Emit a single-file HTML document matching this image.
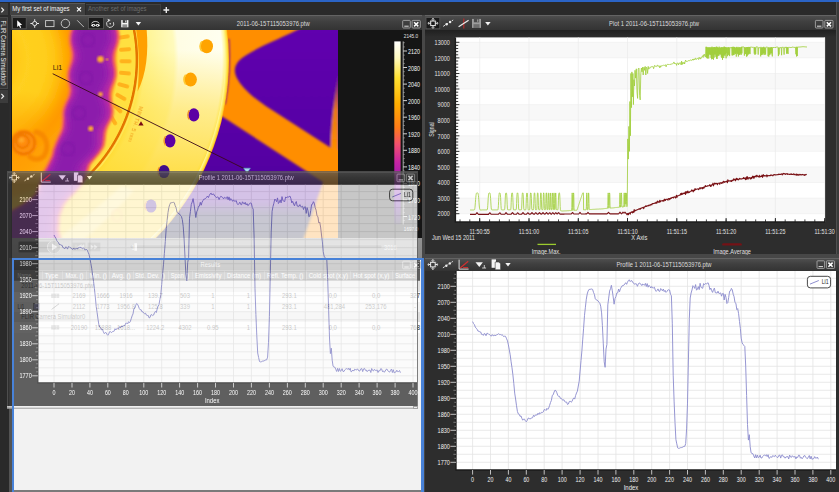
<!DOCTYPE html>
<html><head><meta charset="utf-8"><title>Thermal analysis</title>
<style>
html,body{margin:0;padding:0}
body{width:839px;height:492px;overflow:hidden;position:relative;background:#2c2c2c;font-family:'Liberation Sans',sans-serif;font-size:8px;color:#ddd}
.abs{position:absolute}
.hdr{position:absolute;background:linear-gradient(#4e4e4e,#404040 40%,#333333);border-top:1px solid #636363;box-sizing:border-box}
svg{position:absolute;overflow:hidden}
svg text{font-family:'Liberation Sans',sans-serif;white-space:pre}
</style></head><body>

<div class="abs" style="left:0px;top:0px;width:839px;height:2px;background:#2b64c6;"></div>
<div class="abs" style="left:0px;top:2px;width:839px;height:13px;background:#2a2a2a;"></div>
<div class="abs" style="left:10px;top:3px;width:75px;height:12px;background:#414141;border-top:1px solid #585858;box-sizing:border-box"></div>
<div class="abs" style="left:85.5px;top:3.5px;width:75px;height:11.5px;background:#313131;border-top:1px solid #424242;border-right:1px solid #3c3c3c;box-sizing:border-box"></div>
<div class="abs" style="left:0px;top:2px;width:9px;height:490px;background:#2a2a2a;"></div>
<div class="abs" style="left:0px;top:3px;width:7.5px;height:12px;background:#3c3c3c;"></div>
<div class="abs" style="left:0px;top:17px;width:7.5px;height:72px;background:#363636;border:1px solid #484848;border-left:none;box-sizing:border-box"></div>
<div class="abs" style="left:0px;top:90px;width:7.5px;height:13px;background:#3c3c3c;"></div>
<div class="abs" style="left:422px;top:15px;width:3.5px;height:477px;background:#474747;"></div>
<div class="abs" style="left:425px;top:254px;width:414px;height:4px;background:#474747;"></div>
<div class="abs" style="left:836px;top:2px;width:3px;height:252px;background:#3a3a3a;border-left:1px solid #505050;box-sizing:border-box"></div>
<div class="hdr" style="left:11px;top:15px;width:411px;height:15px"></div>
<div class="abs" style="left:11px;top:30px;width:411px;height:228px;background:#151515;"></div>
<svg style="position:absolute;left:12px;top:30px" width="326" height="208" viewBox="12 30 326 208">
<defs>
<radialGradient id="disc" gradientUnits="userSpaceOnUse" cx="-25.0" cy="60.0" r="254.0"><stop offset="0.1181" stop-color="#ffc010"/><stop offset="0.1575" stop-color="#ffc814"/><stop offset="0.2047" stop-color="#ffd020"/><stop offset="0.2756" stop-color="#ffce1c"/><stop offset="0.3150" stop-color="#ffc412"/><stop offset="0.3465" stop-color="#ffb206"/><stop offset="0.3740" stop-color="#ffa000"/><stop offset="0.3937" stop-color="#ff9800"/><stop offset="0.5512" stop-color="#ffc020"/><stop offset="0.5669" stop-color="#ffe040"/><stop offset="0.6307" stop-color="#ffe040"/><stop offset="0.6339" stop-color="#e47400"/><stop offset="0.6402" stop-color="#e47400"/><stop offset="0.6441" stop-color="#ffe450"/><stop offset="0.6693" stop-color="#fff490"/><stop offset="0.7835" stop-color="#fffabc"/><stop offset="0.8012" stop-color="#fffde4"/><stop offset="0.9724" stop-color="#fffff0"/><stop offset="0.9843" stop-color="#fff8a0"/><stop offset="0.9941" stop-color="#ffe040"/><stop offset="1.0000" stop-color="#ffa810"/></radialGradient>
<linearGradient id="purp" gradientUnits="userSpaceOnUse" x1="0" y1="30" x2="0" y2="238">
 <stop offset="0" stop-color="#6000ae"/><stop offset="0.6" stop-color="#5600a4"/><stop offset="0.82" stop-color="#4c009a"/><stop offset="0.89" stop-color="#1c1248"/><stop offset="1" stop-color="#141434"/>
</linearGradient>
<linearGradient id="rs" gradientUnits="userSpaceOnUse" x1="0" y1="70" x2="0" y2="150"><stop offset="0" stop-color="#ff8e00" stop-opacity="0"/><stop offset="0.5" stop-color="#ff8e00" stop-opacity="0.85"/><stop offset="1" stop-color="#ff8e00"/></linearGradient>
<filter id="b1" x="-10%" y="-10%" width="120%" height="120%"><feGaussianBlur stdDeviation="0.9"/></filter>
<filter id="b2" x="-10%" y="-10%" width="120%" height="120%"><feGaussianBlur stdDeviation="1.6"/></filter>
<filter id="b3" x="-10%" y="-10%" width="120%" height="120%"><feGaussianBlur stdDeviation="2.3"/></filter>
<filter id="b05"><feGaussianBlur stdDeviation="0.55"/></filter>
</defs>
<rect x="12" y="30" width="326" height="208" fill="#ff8e00"/>
<g filter="url(#b1)">
<path d="M308 24 C288 36 258 46 242 58 C233 65 233.5 73 238 80 C244 90 256 100 272 110 L331 148 L340 150 L340 24Z" fill="url(#purp)"/>
<path d="M220 115 L323 182 L303 240 L120 240 L120 180 Z" fill="url(#purp)"/>
<path d="M228.6 39 A257.6 257.6 0 0 1 224.8 104" fill="none" stroke="#7a10a0" stroke-width="1.5"/>
<path d="M338.5 70 L338.5 152 L330.6 148 C331 120 335 95 338.5 70Z" fill="url(#rs)"/>
</g>
<circle cx="-25.0" cy="60.0" r="254.0" fill="url(#disc)" filter="url(#b05)"/>
<linearGradient id="ytint" gradientUnits="userSpaceOnUse" x1="0" y1="50" x2="0" y2="185"><stop offset="0" stop-color="#ffda2c" stop-opacity="0"/><stop offset="0.45" stop-color="#ffda2c" stop-opacity="0.5"/><stop offset="1" stop-color="#ffd620" stop-opacity="0.85"/></linearGradient>
<path fill-rule="evenodd" fill="url(#ytint)" d="M-275.0 60.0a250 250 0 1 0 500 0a250 250 0 1 0 -500 0Z M-190.0 60.0a165 165 0 1 0 330 0a165 165 0 1 0 -330 0Z"/>
<g transform="translate(139.5,106) rotate(108)"><text font-size="5.2" fill="#f09a18" font-family="Liberation Sans, sans-serif" letter-spacing="0.3" filter="url(#b05)">MIN TH. 5 mm</text></g>
<radialGradient id="ll" gradientUnits="userSpaceOnUse" cx="18" cy="165" r="75"><stop offset="0" stop-color="#ff9c00" stop-opacity="0.75"/><stop offset="0.6" stop-color="#ffa000" stop-opacity="0.45"/><stop offset="1" stop-color="#ffa400" stop-opacity="0"/></radialGradient>
<rect x="12" y="80" width="100" height="160" fill="url(#ll)"/>
<path d="M136 29 L146.6 29 C148.6 52 146.6 74 137.6 91.5 C139.6 70 139.4 50 136 29Z" fill="#ffa000" filter="url(#b05)"/>
<rect x="-6" y="-1.9" width="12" height="3.8" rx="1.9" transform="translate(121.4,25.1) rotate(-13.4)" fill="#ffb21a" filter="url(#b05)"/>
<rect x="-6" y="-1.9" width="12" height="3.8" rx="1.9" transform="translate(123.7,37.0) rotate(-8.8)" fill="#ffb21a" filter="url(#b05)"/>
<rect x="-6" y="-1.9" width="12" height="3.8" rx="1.9" transform="translate(125.1,49.5) rotate(-4.0)" fill="#ffb21a" filter="url(#b05)"/>
<rect x="-6" y="-1.9" width="12" height="3.8" rx="1.9" transform="translate(125.5,61.3) rotate(0.5)" fill="#ffb21a" filter="url(#b05)"/>
<rect x="-6" y="-1.9" width="12" height="3.8" rx="1.9" transform="translate(124.9,73.1) rotate(5.0)" fill="#ffb21a" filter="url(#b05)"/>
<rect x="-6" y="-1.9" width="12" height="3.8" rx="1.9" transform="translate(123.3,85.4) rotate(15.6)" fill="#ffb21a" filter="url(#b05)"/>
<rect x="-6" y="-1.9" width="12" height="3.8" rx="1.9" transform="translate(120.9,96.9) rotate(30.0)" fill="#ffb21a" filter="url(#b05)"/>
<rect x="-6" y="-1.9" width="12" height="3.8" rx="1.9" transform="translate(117.5,108.5) rotate(44.8)" fill="#ffb21a" filter="url(#b05)"/>
<rect x="-6" y="-1.9" width="12" height="3.8" rx="1.9" transform="translate(113.1,119.8) rotate(59.5)" fill="#ffb21a" filter="url(#b05)"/>
<path d="M122 186 C100 205 80 222 56 240 L84 240 C104 222 122 205 134 190Z" fill="#fff0a0" opacity="0.55" filter="url(#b2)"/>
<path d="M73.2 22.0 L72.8 24.0 L72.2 26.0 L71.6 28.0 L71.0 30.0 L70.4 32.0 L69.8 34.0 L69.5 36.0 L69.3 38.0 L69.3 40.0 L69.4 42.0 L69.7 44.0 L70.1 46.0 L70.6 48.0 L71.0 50.0 L71.3 52.0 L71.5 54.0 L71.5 56.0 L71.4 58.0 L71.1 60.0 L70.6 62.0 L70.0 64.0 L69.4 66.0 L68.7 68.0 L68.2 70.0 L67.7 72.0 L67.5 74.0 L67.4 76.0 L67.4 78.0 L67.7 80.0 L68.0 82.0 L68.5 84.0 L68.9 86.0 L69.3 88.0 L69.4 90.0 L69.2 92.0 L68.9 94.0 L68.3 96.0 L67.6 98.0 L66.7 100.0 L65.8 102.0 L64.9 104.0 L64.1 106.0 L63.4 108.0 L62.9 110.0 L62.5 112.0 L62.3 114.0 L62.3 116.0 L62.5 118.0 L62.3 120.0 L62.2 122.0 L62.1 124.0 L61.9 126.0 L61.5 128.0 L61.0 130.0 L60.3 132.0 L59.5 134.0 L58.4 136.0 L57.5 138.0 L56.7 140.0 L55.8 142.0 L55.0 144.0 L54.3 146.0 L53.5 148.0 L52.8 150.0 L52.3 152.0 L52.0 154.0 L51.4 156.0 L50.5 158.0 L49.6 160.0 L48.7 162.0 L47.6 164.0 L46.7 166.0 L45.6 168.0 L44.3 170.0 L43.4 172.0 L42.6 174.0 L41.6 176.0 L41.0 178.0 L40.3 180.0 L39.8 182.0 L39.2 184.0 L38.5 186.0 L37.5 188.0 L36.7 190.0 L35.9 192.0 L35.1 194.0 L33.5 196.0 L31.0 198.0 L28.4 200.0 L25.7 202.0 L23.0 204.0 L19.9 206.0 L16.3 208.0 L12.7 210.0 L9.0 212.0 L7.3 214.0 L5.6 216.0 L4.0 218.0 L2.4 220.0 L0.9 222.0 L-0.6 224.0 L-1.9 226.0 L-3.2 228.0 L-4.4 230.0 L-5.5 232.0 L-6.7 234.0 L-7.9 236.0 L-9.1 238.0 L-10.4 240.0 L61.4 240.0 L60.8 238.0 L60.3 236.0 L59.8 234.0 L59.3 232.0 L58.9 230.0 L58.8 228.0 L59.1 226.0 L59.4 224.0 L59.6 222.0 L59.6 220.0 L59.6 218.0 L60.0 216.0 L60.7 214.0 L61.5 212.0 L62.2 210.0 L63.0 208.0 L63.9 206.0 L64.9 204.0 L66.3 202.0 L68.1 200.0 L70.0 198.0 L71.9 196.0 L73.9 194.0 L75.8 192.0 L77.7 190.0 L79.5 188.0 L81.2 186.0 L82.5 184.0 L83.6 182.0 L84.6 180.0 L85.5 178.0 L86.4 176.0 L87.0 174.0 L87.7 172.0 L88.5 170.0 L88.9 168.0 L89.6 166.0 L90.4 164.0 L92.0 162.0 L93.6 160.0 L95.4 158.0 L97.1 156.0 L98.8 154.0 L100.3 152.0 L101.7 150.0 L102.9 148.0 L103.9 146.0 L104.4 144.0 L104.7 142.0 L105.0 140.0 L105.2 138.0 L105.4 136.0 L105.6 134.0 L105.9 132.0 L106.4 130.0 L107.1 128.0 L107.9 126.0 L108.9 124.0 L109.9 122.0 L111.0 120.0 L112.0 118.0 L112.5 116.0 L112.9 114.0 L113.1 112.0 L113.1 110.0 L112.9 108.0 L112.6 106.0 L112.1 104.0 L111.8 102.0 L111.5 100.0 L111.2 98.0 L111.1 96.0 L111.1 94.0 L111.4 92.0 L111.8 90.0 L112.3 88.0 L113.0 86.0 L113.8 84.0 L114.5 82.0 L115.1 80.0 L115.7 78.0 L116.1 76.0 L116.3 74.0 L116.3 72.0 L116.1 70.0 L115.9 68.0 L115.5 66.0 L115.2 64.0 L114.9 62.0 L114.7 60.0 L114.7 58.0 L114.8 56.0 L115.0 54.0 L115.4 52.0 L116.0 50.0 L116.6 48.0 L117.3 46.0 L117.9 44.0 L118.4 42.0 L118.8 40.0 L119.0 38.0 L119.1 36.0 L118.9 34.0 L118.6 32.0 L118.2 30.0 L117.8 28.0 L117.3 26.0 L116.9 24.0 L116.7 22.0Z" fill="#f25c62" stroke="#f6764a" stroke-width="1.6" stroke-linejoin="round" filter="url(#b1)"/>
<path d="M75.6 22.0 L75.2 24.0 L74.6 26.0 L74.0 28.0 L73.4 30.0 L72.8 32.0 L72.2 34.0 L71.9 36.0 L71.7 38.0 L71.7 40.0 L71.8 42.0 L72.1 44.0 L72.5 46.0 L73.0 48.0 L73.4 50.0 L73.7 52.0 L73.9 54.0 L73.9 56.0 L73.8 58.0 L73.5 60.0 L73.0 62.0 L72.4 64.0 L71.8 66.0 L71.1 68.0 L70.6 70.0 L70.1 72.0 L69.9 74.0 L69.8 76.0 L69.8 78.0 L70.1 80.0 L70.4 82.0 L70.9 84.0 L71.3 86.0 L71.7 88.0 L71.8 90.0 L71.6 92.0 L71.3 94.0 L70.7 96.0 L70.0 98.0 L69.1 100.0 L68.2 102.0 L67.3 104.0 L66.5 106.0 L65.8 108.0 L65.3 110.0 L64.9 112.0 L64.7 114.0 L64.7 116.0 L64.9 118.0 L64.7 120.0 L64.6 122.0 L64.5 124.0 L64.3 126.0 L63.9 128.0 L63.4 130.0 L62.7 132.0 L61.9 134.0 L60.8 136.0 L59.9 138.0 L59.1 140.0 L58.2 142.0 L57.4 144.0 L56.7 146.0 L55.9 148.0 L55.2 150.0 L54.7 152.0 L54.4 154.0 L53.8 156.0 L52.9 158.0 L52.0 160.0 L51.1 162.0 L50.0 164.0 L49.1 166.0 L48.0 168.0 L46.7 170.0 L45.8 172.0 L45.0 174.0 L44.0 176.0 L43.4 178.0 L42.7 180.0 L42.2 182.0 L41.6 184.0 L40.9 186.0 L39.9 188.0 L39.1 190.0 L38.3 192.0 L37.5 194.0 L35.9 196.0 L33.4 198.0 L30.8 200.0 L28.1 202.0 L25.4 204.0 L22.3 206.0 L18.7 208.0 L15.1 210.0 L11.4 212.0 L9.7 214.0 L8.0 216.0 L6.4 218.0 L4.8 220.0 L3.3 222.0 L1.8 224.0 L0.5 226.0 L-0.8 228.0 L-2.0 230.0 L-3.1 232.0 L-4.3 234.0 L-5.5 236.0 L-6.7 238.0 L-8.0 240.0 L59.0 240.0 L58.4 238.0 L57.9 236.0 L57.4 234.0 L56.9 232.0 L56.5 230.0 L56.4 228.0 L56.7 226.0 L57.0 224.0 L57.2 222.0 L57.2 220.0 L57.2 218.0 L57.6 216.0 L58.3 214.0 L59.1 212.0 L59.8 210.0 L60.6 208.0 L61.5 206.0 L62.5 204.0 L63.9 202.0 L65.7 200.0 L67.6 198.0 L69.5 196.0 L71.5 194.0 L73.4 192.0 L75.3 190.0 L77.1 188.0 L78.8 186.0 L80.1 184.0 L81.2 182.0 L82.2 180.0 L83.1 178.0 L84.0 176.0 L84.6 174.0 L85.3 172.0 L86.1 170.0 L86.5 168.0 L87.2 166.0 L88.0 164.0 L89.6 162.0 L91.2 160.0 L93.0 158.0 L94.7 156.0 L96.4 154.0 L97.9 152.0 L99.3 150.0 L100.5 148.0 L101.5 146.0 L102.0 144.0 L102.3 142.0 L102.6 140.0 L102.8 138.0 L103.0 136.0 L103.2 134.0 L103.5 132.0 L104.0 130.0 L104.7 128.0 L105.5 126.0 L106.5 124.0 L107.5 122.0 L108.6 120.0 L109.6 118.0 L110.1 116.0 L110.5 114.0 L110.7 112.0 L110.7 110.0 L110.5 108.0 L110.2 106.0 L109.7 104.0 L109.4 102.0 L109.1 100.0 L108.8 98.0 L108.7 96.0 L108.7 94.0 L109.0 92.0 L109.4 90.0 L109.9 88.0 L110.6 86.0 L111.4 84.0 L112.1 82.0 L112.7 80.0 L113.3 78.0 L113.7 76.0 L113.9 74.0 L113.9 72.0 L113.7 70.0 L113.5 68.0 L113.1 66.0 L112.8 64.0 L112.5 62.0 L112.3 60.0 L112.3 58.0 L112.4 56.0 L112.6 54.0 L113.0 52.0 L113.6 50.0 L114.2 48.0 L114.9 46.0 L115.5 44.0 L116.0 42.0 L116.4 40.0 L116.6 38.0 L116.7 36.0 L116.5 34.0 L116.2 32.0 L115.8 30.0 L115.4 28.0 L114.9 26.0 L114.5 24.0 L114.3 22.0Z" fill="#b82ca4" filter="url(#b1)"/>
<path d="M78.4 22.0 L77.9 24.0 L77.2 26.0 L76.4 28.0 L75.5 30.0 L74.7 32.0 L74.1 34.0 L73.6 36.0 L73.4 38.0 L73.4 40.0 L73.7 42.0 L74.1 44.0 L74.7 46.0 L75.3 48.0 L75.9 50.0 L76.4 52.0 L76.7 54.0 L76.8 56.0 L76.7 58.0 L76.2 60.0 L75.6 62.0 L74.9 64.0 L74.0 66.0 L73.2 68.0 L72.5 70.0 L71.9 72.0 L71.6 74.0 L71.5 76.0 L71.6 78.0 L72.0 80.0 L72.5 82.0 L73.2 84.0 L73.8 86.0 L74.4 88.0 L74.6 90.0 L74.5 92.0 L74.2 94.0 L73.6 96.0 L72.7 98.0 L71.7 100.0 L70.6 102.0 L69.4 104.0 L68.5 106.0 L67.6 108.0 L67.0 110.0 L66.6 112.0 L66.5 114.0 L66.6 116.0 L66.8 118.0 L66.9 120.0 L67.0 122.0 L67.1 124.0 L67.0 126.0 L66.8 128.0 L66.3 130.0 L65.6 132.0 L64.7 134.0 L63.5 136.0 L62.4 138.0 L61.3 140.0 L60.3 142.0 L59.3 144.0 L58.5 146.0 L57.6 148.0 L56.9 150.0 L56.5 152.0 L56.3 154.0 L55.9 156.0 L55.2 158.0 L54.5 160.0 L53.7 162.0 L52.8 164.0 L52.0 166.0 L50.9 168.0 L49.5 170.0 L48.6 172.0 L47.6 174.0 L46.4 176.0 L45.6 178.0 L44.9 180.0 L44.2 182.0 L43.7 184.0 L42.9 186.0 L42.0 188.0 L41.1 190.0 L40.4 192.0 L39.8 194.0 L38.2 196.0 L35.8 198.0 L33.3 200.0 L30.7 202.0 L28.0 204.0 L24.9 206.0 L21.3 208.0 L17.6 210.0 L13.8 212.0 L12.0 214.0 L10.2 216.0 L8.5 218.0 L6.8 220.0 L5.3 222.0 L3.8 224.0 L2.5 226.0 L1.3 228.0 L0.2 230.0 L-0.8 232.0 L-1.9 234.0 L-3.0 236.0 L-4.2 238.0 L-5.4 240.0 L54.4 240.0 L53.9 238.0 L53.4 236.0 L53.0 234.0 L52.6 232.0 L52.3 230.0 L52.3 228.0 L52.7 226.0 L53.0 224.0 L53.2 222.0 L53.2 220.0 L53.1 218.0 L53.4 216.0 L54.0 214.0 L54.7 212.0 L55.3 210.0 L56.1 208.0 L56.9 206.0 L57.9 204.0 L59.3 202.0 L61.2 200.0 L63.2 198.0 L65.2 196.0 L67.2 194.0 L69.2 192.0 L71.2 190.0 L73.0 188.0 L74.8 186.0 L76.1 184.0 L77.1 182.0 L78.0 180.0 L78.9 178.0 L79.7 176.0 L80.0 174.0 L80.6 172.0 L81.2 170.0 L81.6 168.0 L82.3 166.0 L83.2 164.0 L84.9 162.0 L86.8 160.0 L88.7 158.0 L90.7 156.0 L92.5 154.0 L94.2 152.0 L95.6 150.0 L96.8 148.0 L97.7 146.0 L98.1 144.0 L98.2 142.0 L98.3 140.0 L98.3 138.0 L98.4 136.0 L98.4 134.0 L98.6 132.0 L99.1 130.0 L99.8 128.0 L100.8 126.0 L101.9 124.0 L103.1 122.0 L104.4 120.0 L105.7 118.0 L106.3 116.0 L106.7 114.0 L107.0 112.0 L106.9 110.0 L106.6 108.0 L106.2 106.0 L105.6 104.0 L105.0 102.0 L104.5 100.0 L104.1 98.0 L103.8 96.0 L103.8 94.0 L104.1 92.0 L104.6 90.0 L105.3 88.0 L106.2 86.0 L107.1 84.0 L108.0 82.0 L108.8 80.0 L109.5 78.0 L109.9 76.0 L110.1 74.0 L110.1 72.0 L109.8 70.0 L109.4 68.0 L108.9 66.0 L108.3 64.0 L107.8 62.0 L107.5 60.0 L107.4 58.0 L107.5 56.0 L107.8 54.0 L108.3 52.0 L109.0 50.0 L109.8 48.0 L110.7 46.0 L111.5 44.0 L112.2 42.0 L112.7 40.0 L112.9 38.0 L112.9 36.0 L112.7 34.0 L112.2 32.0 L111.7 30.0 L111.0 28.0 L110.3 26.0 L109.8 24.0 L109.4 22.0Z" fill="#9a22ae" filter="url(#b3)"/>
<path d="M82.3 22.0 L81.7 24.0 L80.9 26.0 L79.9 28.0 L79.0 30.0 L78.0 32.0 L77.3 34.0 L76.7 36.0 L76.5 38.0 L76.5 40.0 L76.8 42.0 L77.4 44.0 L78.1 46.0 L78.9 48.0 L79.6 50.0 L80.2 52.0 L80.6 54.0 L80.7 56.0 L80.5 58.0 L80.1 60.0 L79.4 62.0 L78.5 64.0 L77.5 66.0 L76.6 68.0 L75.7 70.0 L75.1 72.0 L74.7 74.0 L74.6 76.0 L74.8 78.0 L75.2 80.0 L75.9 82.0 L76.6 84.0 L77.4 86.0 L78.1 88.0 L78.4 90.0 L78.4 92.0 L78.1 94.0 L77.4 96.0 L76.5 98.0 L75.4 100.0 L74.1 102.0 L72.9 104.0 L71.8 106.0 L70.8 108.0 L70.1 110.0 L69.7 112.0 L69.6 114.0 L69.7 116.0 L70.1 118.0 L70.3 120.0 L70.5 122.0 L70.7 124.0 L70.8 126.0 L70.6 128.0 L70.2 130.0 L69.5 132.0 L68.5 134.0 L67.2 136.0 L66.0 138.0 L64.8 140.0 L63.6 142.0 L62.6 144.0 L61.6 146.0 L60.7 148.0 L60.0 150.0 L59.7 152.0 L59.6 154.0 L59.2 156.0 L58.7 158.0 L58.1 160.0 L57.5 162.0 L56.7 164.0 L55.9 166.0 L54.8 168.0 L53.4 170.0 L52.4 172.0 L51.3 174.0 L49.9 176.0 L49.1 178.0 L48.3 180.0 L47.6 182.0 L47.0 184.0 L46.2 186.0 L45.3 188.0 L44.5 190.0 L43.8 192.0 L43.2 194.0 L41.8 196.0 L39.4 198.0 L36.9 200.0 L34.4 202.0 L31.7 204.0 L28.5 206.0 L24.9 208.0 L21.2 210.0 L17.4 212.0 L15.5 214.0 L13.7 216.0 L11.9 218.0 L10.2 220.0 L8.6 222.0 L7.1 224.0 L5.9 226.0 L4.7 228.0 L3.7 230.0 L2.7 232.0 L1.7 234.0 L0.6 236.0 L-0.5 238.0 L-1.7 240.0 L48.7 240.0 L48.2 238.0 L47.8 236.0 L47.4 234.0 L47.1 232.0 L46.8 230.0 L46.9 228.0 L47.4 226.0 L47.7 224.0 L47.9 222.0 L47.9 220.0 L47.8 218.0 L48.0 216.0 L48.6 214.0 L49.1 212.0 L49.7 210.0 L50.4 208.0 L51.2 206.0 L52.2 204.0 L53.6 202.0 L55.6 200.0 L57.6 198.0 L59.7 196.0 L61.8 194.0 L63.8 192.0 L65.8 190.0 L67.7 188.0 L69.5 186.0 L70.8 184.0 L71.8 182.0 L72.6 180.0 L73.4 178.0 L74.1 176.0 L74.3 174.0 L74.8 172.0 L75.3 170.0 L75.7 168.0 L76.4 166.0 L77.3 164.0 L79.2 162.0 L81.2 160.0 L83.2 158.0 L85.3 156.0 L87.3 154.0 L89.0 152.0 L90.5 150.0 L91.7 148.0 L92.6 146.0 L92.9 144.0 L92.9 142.0 L92.8 140.0 L92.7 138.0 L92.6 136.0 L92.5 134.0 L92.7 132.0 L93.2 130.0 L93.9 128.0 L95.0 126.0 L96.2 124.0 L97.6 122.0 L99.0 120.0 L100.4 118.0 L101.1 116.0 L101.6 114.0 L101.9 112.0 L101.8 110.0 L101.5 108.0 L100.9 106.0 L100.1 104.0 L99.5 102.0 L98.8 100.0 L98.3 98.0 L98.0 96.0 L97.9 94.0 L98.2 92.0 L98.8 90.0 L99.6 88.0 L100.5 86.0 L101.6 84.0 L102.7 82.0 L103.6 80.0 L104.4 78.0 L104.8 76.0 L105.0 74.0 L104.9 72.0 L104.6 70.0 L104.0 68.0 L103.4 66.0 L102.7 64.0 L102.1 62.0 L101.7 60.0 L101.5 58.0 L101.6 56.0 L101.9 54.0 L102.5 52.0 L103.3 50.0 L104.3 48.0 L105.3 46.0 L106.2 44.0 L107.0 42.0 L107.6 40.0 L107.8 38.0 L107.8 36.0 L107.5 34.0 L106.9 32.0 L106.2 30.0 L105.4 28.0 L104.6 26.0 L104.0 24.0 L103.6 22.0Z" fill="#8c1cac" filter="url(#b3)"/>
<circle cx="88" cy="40" r="6.5" fill="none" stroke="#7c18a4" stroke-width="2.2" opacity="0.5" filter="url(#b1)"/>
<circle cx="86" cy="78" r="6.5" fill="none" stroke="#7c18a4" stroke-width="2.2" opacity="0.5" filter="url(#b1)"/>
<circle cx="79" cy="113" r="6.5" fill="none" stroke="#7c18a4" stroke-width="2.2" opacity="0.5" filter="url(#b1)"/>
<circle cx="68" cy="149" r="6.5" fill="none" stroke="#7c18a4" stroke-width="2.2" opacity="0.5" filter="url(#b1)"/>
<circle cx="49" cy="186" r="6.5" fill="none" stroke="#7c18a4" stroke-width="2.2" opacity="0.5" filter="url(#b1)"/>
<circle cx="100.5" cy="59.3" r="3.3" fill="#ffae30" filter="url(#b1)"/>
<circle cx="100.5" cy="94.3" r="2.2" fill="#ffae30" filter="url(#b1)"/>
<circle cx="90.8" cy="128.6" r="2.6" fill="#ffae30" filter="url(#b1)"/>
<circle cx="107" cy="59.5" r="1.2" fill="#ffae30" filter="url(#b1)"/>
<g filter="url(#b1)"><circle cx="23.7" cy="143" r="13.5" fill="#ff920a"/><circle cx="23.7" cy="143" r="11" fill="none" stroke="#ec6e02" stroke-width="1.8"/><circle cx="22.5" cy="141.5" r="6.5" fill="#ff8c08"/><circle cx="22.5" cy="141.5" r="6.5" fill="none" stroke="#e86c04" stroke-width="1.4"/><circle cx="21.5" cy="140" r="2.6" fill="#ffa828"/><path d="M36 132C46 134 50 146 44 156C40 160 34 160 30 157" fill="none" stroke="#f88a06" stroke-width="5" stroke-linecap="round"/></g>
<ellipse cx="206.7" cy="46.3" rx="6.3" ry="7" fill="#ffa400" filter="url(#b05)"/>
<path d="M201.79999999999998 41.5 A6.3 7 0 0 0 201.79999999999998 51.099999999999994" fill="none" stroke="#ffc830" stroke-width="1.7" filter="url(#b05)"/>
<ellipse cx="190.6" cy="79.6" rx="6.3" ry="7" fill="#ffa400" filter="url(#b05)"/>
<path d="M185.7 74.8 A6.3 7 0 0 0 185.7 84.39999999999999" fill="none" stroke="#ffc830" stroke-width="1.7" filter="url(#b05)"/>
<ellipse cx="193.8" cy="114.9" rx="5.5" ry="6.6" fill="#5c00a4" filter="url(#b05)"/>
<path d="M189.3 110.5 A5.5 6.6 0 0 0 189.3 119.30000000000001" fill="none" stroke="#f0902a" stroke-width="1.5" filter="url(#b05)"/>
<ellipse cx="170" cy="140.8" rx="5.5" ry="6.6" fill="#5c00a4" filter="url(#b05)"/>
<path d="M165.5 136.4 A5.5 6.6 0 0 0 165.5 145.20000000000002" fill="none" stroke="#f0902a" stroke-width="1.5" filter="url(#b05)"/>
<ellipse cx="164" cy="171.5" rx="5.5" ry="6.6" fill="#40088a" filter="url(#b05)"/>
<path d="M159.5 167.1 A5.5 6.6 0 0 0 159.5 175.9" fill="none" stroke="#f0902a" stroke-width="1.5" filter="url(#b05)"/>
<ellipse cx="151" cy="206" rx="5.5" ry="6.6" fill="#40088a" filter="url(#b05)"/>
<path d="M146.5 201.6 A5.5 6.6 0 0 0 146.5 210.4" fill="none" stroke="#f0902a" stroke-width="1.5" filter="url(#b05)"/>
<ellipse cx="117" cy="215.6" rx="5" ry="6" fill="none" stroke="#ffc040" stroke-width="1.6" filter="url(#b1)"/>
<path d="M52.7 73.7L247 170" stroke="#3a0818" stroke-width="0.9"/>
<text transform="translate(52.80,69.73) scale(1.036,1)" font-size="6.8" fill="#3c2208" >Li1</text>
<path d="M141 121.2L143.6 125.6H138.4Z" fill="#7a0c14"/>
<path d="M243.6 168.2H250.4L247 173Z" fill="#a8d8f0" stroke="#5d9cc0" stroke-width="0.6"/>
</svg>
<svg style="left:0;top:0" width="10" height="110" viewBox="0 0 10 110"><path d="M1.4 7.6L3.6 10L1.4 12.4M1.4 93.8L3.6 96.2L1.4 98.6" stroke="#eee" stroke-width="1.2" fill="none"/><g transform="translate(1.2,20.6) rotate(90)"><text transform="translate(0.00,0.21) scale(0.840,1)" font-size="7" fill="#e6e6e6" >FLIR Camera Simulator0</text></g></svg>
<svg style="left:380px;top:30px" width="43" height="210" viewBox="380 30 43 210"><defs><linearGradient id="cbar" x1="0" y1="0" x2="0" y2="1">
<stop offset="0" stop-color="#ffffff"/><stop offset="0.09" stop-color="#fffac0"/><stop offset="0.2" stop-color="#ffe030"/><stop offset="0.34" stop-color="#ffae00"/>
<stop offset="0.47" stop-color="#ff7c18"/><stop offset="0.56" stop-color="#f2506c"/><stop offset="0.66" stop-color="#c624a4"/><stop offset="0.77" stop-color="#9418b0"/><stop offset="0.88" stop-color="#5a00a0"/><stop offset="1" stop-color="#100828"/></linearGradient></defs><rect x="394.3" y="41.4" width="6.3" height="183" fill="url(#cbar)"/><path d="M403.2 41.4V224.4" stroke="#cfcfcf" stroke-width="0.8"/><path d="M403.2 51.0H407" stroke="#e6e6e6" stroke-width="0.9"/><text transform="translate(408.00,54.06) scale(0.674,1)" font-size="8" fill="#f8f8f8" >2120</text><path d="M403.2 55.1H404.8" stroke="#bbb" stroke-width="0.6"/><path d="M403.2 59.3H404.8" stroke="#bbb" stroke-width="0.6"/><path d="M403.2 63.4H404.8" stroke="#bbb" stroke-width="0.6"/><path d="M403.2 67.5H407" stroke="#e6e6e6" stroke-width="0.9"/><text transform="translate(408.00,70.61) scale(0.674,1)" font-size="8" fill="#f8f8f8" >2080</text><path d="M403.2 71.7H404.8" stroke="#bbb" stroke-width="0.6"/><path d="M403.2 75.8H404.8" stroke="#bbb" stroke-width="0.6"/><path d="M403.2 80.0H404.8" stroke="#bbb" stroke-width="0.6"/><path d="M403.2 84.1H407" stroke="#e6e6e6" stroke-width="0.9"/><text transform="translate(408.00,87.16) scale(0.674,1)" font-size="8" fill="#f8f8f8" >2040</text><path d="M403.2 88.2H404.8" stroke="#bbb" stroke-width="0.6"/><path d="M403.2 92.4H404.8" stroke="#bbb" stroke-width="0.6"/><path d="M403.2 96.5H404.8" stroke="#bbb" stroke-width="0.6"/><path d="M403.2 100.6H407" stroke="#e6e6e6" stroke-width="0.9"/><text transform="translate(408.00,103.71) scale(0.674,1)" font-size="8" fill="#f8f8f8" >2000</text><path d="M403.2 104.8H404.8" stroke="#bbb" stroke-width="0.6"/><path d="M403.2 108.9H404.8" stroke="#bbb" stroke-width="0.6"/><path d="M403.2 113.1H404.8" stroke="#bbb" stroke-width="0.6"/><path d="M403.2 117.2H407" stroke="#e6e6e6" stroke-width="0.9"/><text transform="translate(408.00,120.26) scale(0.674,1)" font-size="8" fill="#f8f8f8" >1960</text><path d="M403.2 121.3H404.8" stroke="#bbb" stroke-width="0.6"/><path d="M403.2 125.5H404.8" stroke="#bbb" stroke-width="0.6"/><path d="M403.2 129.6H404.8" stroke="#bbb" stroke-width="0.6"/><path d="M403.2 133.8H407" stroke="#e6e6e6" stroke-width="0.9"/><text transform="translate(408.00,136.81) scale(0.674,1)" font-size="8" fill="#f8f8f8" >1920</text><path d="M403.2 137.9H404.8" stroke="#bbb" stroke-width="0.6"/><path d="M403.2 142.0H404.8" stroke="#bbb" stroke-width="0.6"/><path d="M403.2 146.2H404.8" stroke="#bbb" stroke-width="0.6"/><path d="M403.2 150.3H407" stroke="#e6e6e6" stroke-width="0.9"/><text transform="translate(408.00,153.36) scale(0.674,1)" font-size="8" fill="#f8f8f8" >1880</text><path d="M403.2 154.4H404.8" stroke="#bbb" stroke-width="0.6"/><path d="M403.2 158.6H404.8" stroke="#bbb" stroke-width="0.6"/><path d="M403.2 162.7H404.8" stroke="#bbb" stroke-width="0.6"/><path d="M403.2 166.9H407" stroke="#e6e6e6" stroke-width="0.9"/><text transform="translate(408.00,169.91) scale(0.674,1)" font-size="8" fill="#f8f8f8" >1840</text><path d="M403.2 171.0H404.8" stroke="#bbb" stroke-width="0.6"/><path d="M403.2 175.1H404.8" stroke="#bbb" stroke-width="0.6"/><path d="M403.2 179.3H404.8" stroke="#bbb" stroke-width="0.6"/><path d="M403.2 183.4H407" stroke="#e6e6e6" stroke-width="0.9"/><text transform="translate(408.00,186.46) scale(0.674,1)" font-size="8" fill="#f8f8f8" >1800</text><path d="M403.2 187.5H404.8" stroke="#bbb" stroke-width="0.6"/><path d="M403.2 191.7H404.8" stroke="#bbb" stroke-width="0.6"/><path d="M403.2 195.8H404.8" stroke="#bbb" stroke-width="0.6"/><path d="M403.2 200.0H407" stroke="#e6e6e6" stroke-width="0.9"/><text transform="translate(408.00,203.01) scale(0.674,1)" font-size="8" fill="#f8f8f8" >1760</text><path d="M403.2 204.1H404.8" stroke="#bbb" stroke-width="0.6"/><path d="M403.2 208.2H404.8" stroke="#bbb" stroke-width="0.6"/><path d="M403.2 212.4H404.8" stroke="#bbb" stroke-width="0.6"/><path d="M403.2 216.5H407" stroke="#e6e6e6" stroke-width="0.9"/><text transform="translate(408.00,219.56) scale(0.674,1)" font-size="8" fill="#f8f8f8" >1720</text><path d="M403.2 220.6H404.8" stroke="#bbb" stroke-width="0.6"/><path d="M403.2 46.9H404.8" stroke="#bbb" stroke-width="0.6"/><path d="M403.2 42.7H404.8" stroke="#bbb" stroke-width="0.6"/><text transform="translate(403.80,38.08) scale(0.801,1)" font-size="5.8" fill="#e4e4e4" >2145.0</text><text transform="translate(403.80,230.68) scale(0.801,1)" font-size="5.8" fill="#e4e4e4" >1697.0</text></svg>
<div class="abs" style="left:12px;top:238px;width:410px;height:20px;background:linear-gradient(#929292,#888888);"></div>
<svg style="left:12px;top:238px" width="410" height="20" viewBox="12 238 410 20"><rect x="18.5" y="241.5" width="34" height="11" rx="1.5" fill="#383838" stroke="#6a6a6a" stroke-width="0.8"/><circle cx="54" cy="247" r="6.6" fill="#5a5a5a" stroke="#9a9a9a" stroke-width="1"/><path d="M52 243.6L57.4 247L52 250.4Z" fill="#dcdcdc"/><circle cx="66" cy="244" r="3.2" fill="none" stroke="#8a8a8a" stroke-width="0.9"/><rect x="72.5" y="242.5" width="13" height="9" rx="1" fill="#5a5a5a" stroke="#7e7e7e" stroke-width="0.8"/><rect x="87.5" y="242.5" width="13" height="9" rx="1" fill="#5a5a5a" stroke="#7e7e7e" stroke-width="0.8"/><path d="M76 244.6V249.4M81.4 244.6L77.4 247L81.4 249.4ZM84 244.6L80.6 247L84 249.4Z" fill="#b8b8b8" stroke="#b8b8b8" stroke-width="0.5"/><path d="M90.6 244.6L94 247L90.6 249.4ZM94.2 244.6L97.6 247L94.2 249.4Z" fill="#b8b8b8"/><rect x="130" y="245" width="252" height="3.6" rx="1.8" fill="#5c5c5c" stroke="#a0a0a0" stroke-width="0.5"/><rect x="134.4" y="243.2" width="2.6" height="7.6" fill="#e8e8e8"/><text transform="translate(131.40,249.51) scale(0.840,1)" font-size="7" fill="#ddd" >1</text><text transform="translate(384.00,249.85) scale(0.765,1)" font-size="7.4" fill="#e8e8e8" >3016</text></svg>
<div class="abs" style="left:12px;top:258px;width:410px;height:234px;background:#f2f2f2;"></div>
<div class="abs" style="left:14px;top:260px;width:406px;height:10px;background:linear-gradient(#464646,#343434);"></div>
<div class="abs" style="left:14px;top:270px;width:406px;height:11px;background:#5e5e5e;border-bottom:1px solid #7c7c7c;box-sizing:border-box"></div>
<div class="abs" style="left:14px;top:281px;width:406px;height:10.5px;background:#dedede;"></div>
<div class="abs" style="left:14px;top:291.5px;width:406px;height:10.5px;background:#fdfdfd;"></div>
<div class="abs" style="left:14px;top:302px;width:406px;height:10px;background:#f1f1f1;"></div>
<div class="abs" style="left:14px;top:312px;width:406px;height:10px;background:#dedede;"></div>
<div class="abs" style="left:14px;top:322px;width:406px;height:11px;background:#fdfdfd;"></div>
<svg style="left:0;top:258px" width="430" height="100" viewBox="0 258 430 100"><text transform="translate(200.60,267.38) scale(0.816,1)" font-size="7.2" fill="#e0e0e0" >Results</text><text transform="translate(17.50,278.25) scale(0.684,1)" font-size="7.4" fill="#ffffff" >Name</text><text transform="translate(44.70,278.25) scale(0.848,1)" font-size="7.4" fill="#ffffff" >Type</text><text transform="translate(65.50,278.25) scale(0.782,1)" font-size="7.4" fill="#ffffff" >Max. ()</text><text transform="translate(89.60,278.25) scale(0.821,1)" font-size="7.4" fill="#ffffff" >Min. ()</text><text transform="translate(111.80,278.25) scale(0.877,1)" font-size="7.4" fill="#ffffff" >Avg. ()</text><text transform="translate(135.00,278.25) scale(0.814,1)" font-size="7.4" fill="#ffffff" >Std. Dev. ()</text><text transform="translate(170.70,278.25) scale(0.758,1)" font-size="7.4" fill="#ffffff" >Span ()</text><text transform="translate(195.00,278.25) scale(0.803,1)" font-size="7.4" fill="#ffffff" >Emissivity</text><text transform="translate(227.00,278.25) scale(0.811,1)" font-size="7.4" fill="#ffffff" >Distance (m)</text><text transform="translate(267.00,278.25) scale(0.820,1)" font-size="7.4" fill="#ffffff" >Refl. Temp. ()</text><text transform="translate(308.70,278.25) scale(0.824,1)" font-size="7.4" fill="#ffffff" >Cold spot (x,y)</text><text transform="translate(353.00,278.25) scale(0.825,1)" font-size="7.4" fill="#ffffff" >Hot spot (x,y)</text><text transform="translate(395.00,278.25) scale(0.784,1)" font-size="7.4" fill="#ffffff" >Surface</text><path d="M42.5 271V280" stroke="#808080" stroke-width="1"/><path d="M62.5 271V280" stroke="#808080" stroke-width="1"/><path d="M86.5 271V280" stroke="#808080" stroke-width="1"/><path d="M109.5 271V280" stroke="#808080" stroke-width="1"/><path d="M133.5 271V280" stroke="#808080" stroke-width="1"/><path d="M168.5 271V280" stroke="#808080" stroke-width="1"/><path d="M192.5 271V280" stroke="#808080" stroke-width="1"/><path d="M224.5 271V280" stroke="#808080" stroke-width="1"/><path d="M264.5 271V280" stroke="#808080" stroke-width="1"/><path d="M306.5 271V280" stroke="#808080" stroke-width="1"/><path d="M350.5 271V280" stroke="#808080" stroke-width="1"/><path d="M392.5 271V280" stroke="#808080" stroke-width="1"/><text transform="translate(21.30,287.85) scale(0.790,1)" font-size="7.4" fill="#1a1a1a" >2011-06-15T115053976.ptw</text><text transform="translate(21.30,318.95) scale(0.782,1)" font-size="7.4" fill="#1a1a1a" >FLIR Camera Simulator0</text><text transform="translate(72.42,298.45) scale(0.800,1)" font-size="7.4" fill="#1a1a1a" >2169</text><text transform="translate(96.42,298.45) scale(0.800,1)" font-size="7.4" fill="#1a1a1a" >1666</text><text transform="translate(119.42,298.45) scale(0.800,1)" font-size="7.4" fill="#1a1a1a" >1916</text><text transform="translate(147.89,298.45) scale(0.800,1)" font-size="7.4" fill="#1a1a1a" >139.7</text><text transform="translate(180.06,298.45) scale(0.800,1)" font-size="7.4" fill="#1a1a1a" >503</text><text transform="translate(211.15,298.45) scale(0.800,1)" font-size="7.4" fill="#1a1a1a" >1</text><text transform="translate(246.75,298.45) scale(0.800,1)" font-size="7.4" fill="#1a1a1a" >1</text><text transform="translate(281.99,298.45) scale(0.800,1)" font-size="7.4" fill="#1a1a1a" >293.1</text><text transform="translate(328.69,298.45) scale(0.800,1)" font-size="7.4" fill="#1a1a1a" >0,0</text><text transform="translate(371.99,298.45) scale(0.800,1)" font-size="7.4" fill="#1a1a1a" >0,0</text><text transform="translate(410.06,298.45) scale(0.800,1)" font-size="7.4" fill="#1a1a1a" >327</text><text transform="translate(72.64,309.25) scale(0.800,1)" font-size="7.4" fill="#1a1a1a" >2112</text><text transform="translate(96.42,309.25) scale(0.800,1)" font-size="7.4" fill="#1a1a1a" >1773</text><text transform="translate(116.95,309.25) scale(0.800,1)" font-size="7.4" fill="#1a1a1a" >1956.8</text><text transform="translate(147.89,309.25) scale(0.800,1)" font-size="7.4" fill="#1a1a1a" >125.8</text><text transform="translate(180.06,309.25) scale(0.800,1)" font-size="7.4" fill="#1a1a1a" >339</text><text transform="translate(211.15,309.25) scale(0.800,1)" font-size="7.4" fill="#1a1a1a" >1</text><text transform="translate(246.75,309.25) scale(0.800,1)" font-size="7.4" fill="#1a1a1a" >1</text><text transform="translate(281.99,309.25) scale(0.800,1)" font-size="7.4" fill="#1a1a1a" >293.1</text><text transform="translate(323.80,309.25) scale(0.800,1)" font-size="7.4" fill="#1a1a1a" >481,284</text><text transform="translate(365.30,309.25) scale(0.800,1)" font-size="7.4" fill="#1a1a1a" >253,176</text><text transform="translate(414.01,309.25) scale(0.800,1)" font-size="7.4" fill="#1a1a1a" >-</text><text transform="translate(70.77,330.05) scale(0.800,1)" font-size="7.4" fill="#1a1a1a" >20190</text><text transform="translate(94.77,330.05) scale(0.800,1)" font-size="7.4" fill="#1a1a1a" >15888</text><text transform="translate(116.95,330.05) scale(0.800,1)" font-size="7.4" fill="#1a1a1a" >1618...</text><text transform="translate(146.25,330.05) scale(0.800,1)" font-size="7.4" fill="#1a1a1a" >1224.2</text><text transform="translate(178.42,330.05) scale(0.800,1)" font-size="7.4" fill="#1a1a1a" >4302</text><text transform="translate(207.04,330.05) scale(0.800,1)" font-size="7.4" fill="#1a1a1a" >0.95</text><text transform="translate(246.75,330.05) scale(0.800,1)" font-size="7.4" fill="#1a1a1a" >1</text><text transform="translate(281.99,330.05) scale(0.800,1)" font-size="7.4" fill="#1a1a1a" >293.1</text><text transform="translate(328.69,330.05) scale(0.800,1)" font-size="7.4" fill="#1a1a1a" >0,0</text><text transform="translate(371.99,330.05) scale(0.800,1)" font-size="7.4" fill="#1a1a1a" >0,0</text><text transform="translate(410.06,330.05) scale(0.800,1)" font-size="7.4" fill="#1a1a1a" >768</text><text transform="translate(17.60,309.25) scale(0.689,1)" font-size="7.4" fill="#111" >Li1</text><rect x="51.2" y="293.6" width="8" height="4.4" fill="#9a9a9a"/><path d="M51.2 295.8H59.2M53.9 293.6V298.0M56.5 293.6V298.0" stroke="#ddd" stroke-width="0.5"/><rect x="51.2" y="325.2" width="8" height="4.4" fill="#9a9a9a"/><path d="M51.2 327.4H59.2M53.9 325.2V329.59999999999997M56.5 325.2V329.59999999999997" stroke="#ddd" stroke-width="0.5"/><rect x="33.6" y="303.4" width="6" height="6.4" fill="#8c8cc8" stroke="#555" stroke-width="0.7"/><path d="M51.6 309.4L59 303.8" stroke="#444" stroke-width="0.9"/><g fill="none" stroke="#b4b4b4" stroke-width="0.8"><rect x="402.7" y="261.2" width="7.6" height="7.6" rx="0.8"/><path d="M404.3 267.0H408.7" stroke="#e0e0e0" stroke-width="1"/><rect x="412.1" y="261.2" width="8.2" height="7.6" rx="0.8"/><path d="M414.1 263.0L418.3 267.2M418.3 263.0L414.1 267.2" stroke="#ffffff" stroke-width="1.5"/></g></svg>
<div class="abs" style="left:14px;top:490px;width:407px;height:2px;background:#7a7a7a;"></div>
<div class="abs" style="left:9px;top:258px;width:3px;height:234px;background:#545454;"></div>
<div class="hdr" style="left:425px;top:15px;width:411px;height:15px"></div>
<div class="abs" style="left:425px;top:30px;width:411px;height:224px;background:linear-gradient(#202020,#2d2d2d 7px);"></div>
<svg style="left:425px;top:30px" width="411" height="225" viewBox="425 30 411 225"><rect x="455.4" y="37.4" width="369.6" height="184.6" fill="#ffffff"/><rect x="455.4" y="198.1" width="369.6" height="15.6" fill="#f8f8f8"/><rect x="455.4" y="166.9" width="369.6" height="15.6" fill="#f8f8f8"/><rect x="455.4" y="135.8" width="369.6" height="15.6" fill="#f8f8f8"/><rect x="455.4" y="104.6" width="369.6" height="15.6" fill="#f8f8f8"/><rect x="455.4" y="73.5" width="369.6" height="15.6" fill="#f8f8f8"/><rect x="455.4" y="42.3" width="369.6" height="15.6" fill="#f8f8f8"/><path d="M455.4 213.7H825" stroke="#efefef" stroke-width="0.6"/><path d="M455.4 198.1H825" stroke="#efefef" stroke-width="0.6"/><path d="M455.4 182.5H825" stroke="#efefef" stroke-width="0.6"/><path d="M455.4 166.9H825" stroke="#efefef" stroke-width="0.6"/><path d="M455.4 151.4H825" stroke="#efefef" stroke-width="0.6"/><path d="M455.4 135.8H825" stroke="#efefef" stroke-width="0.6"/><path d="M455.4 120.2H825" stroke="#efefef" stroke-width="0.6"/><path d="M455.4 104.6H825" stroke="#efefef" stroke-width="0.6"/><path d="M455.4 89.0H825" stroke="#efefef" stroke-width="0.6"/><path d="M455.4 73.5H825" stroke="#efefef" stroke-width="0.6"/><path d="M455.4 57.9H825" stroke="#efefef" stroke-width="0.6"/><path d="M455.4 42.3H825" stroke="#efefef" stroke-width="0.6"/><path d="M479.7 37.4V222" stroke="#ebebeb" stroke-width="0.7"/><path d="M529.0 37.4V222" stroke="#ebebeb" stroke-width="0.7"/><path d="M578.3 37.4V222" stroke="#ebebeb" stroke-width="0.7"/><path d="M627.5 37.4V222" stroke="#ebebeb" stroke-width="0.7"/><path d="M676.8 37.4V222" stroke="#ebebeb" stroke-width="0.7"/><path d="M726.1 37.4V222" stroke="#ebebeb" stroke-width="0.7"/><path d="M775.4 37.4V222" stroke="#ebebeb" stroke-width="0.7"/><path d="M824.7 37.4V222" stroke="#ebebeb" stroke-width="0.7"/><path d="M455.4 37.4V222H825" stroke="#1c1c1c" stroke-width="1.4" fill="none"/><path d="M455.4 213.7h4" stroke="#1c1c1c" stroke-width="0.9"/><path d="M455.4 210.6h2.8" stroke="#1c1c1c" stroke-width="0.9"/><path d="M455.4 207.4h2.8" stroke="#1c1c1c" stroke-width="0.9"/><path d="M455.4 204.3h2.8" stroke="#1c1c1c" stroke-width="0.9"/><path d="M455.4 201.2h2.8" stroke="#1c1c1c" stroke-width="0.9"/><path d="M455.4 198.1h4" stroke="#1c1c1c" stroke-width="0.9"/><path d="M455.4 195.0h2.8" stroke="#1c1c1c" stroke-width="0.9"/><path d="M455.4 191.9h2.8" stroke="#1c1c1c" stroke-width="0.9"/><path d="M455.4 188.8h2.8" stroke="#1c1c1c" stroke-width="0.9"/><path d="M455.4 185.6h2.8" stroke="#1c1c1c" stroke-width="0.9"/><path d="M455.4 182.5h4" stroke="#1c1c1c" stroke-width="0.9"/><path d="M455.4 179.4h2.8" stroke="#1c1c1c" stroke-width="0.9"/><path d="M455.4 176.3h2.8" stroke="#1c1c1c" stroke-width="0.9"/><path d="M455.4 173.2h2.8" stroke="#1c1c1c" stroke-width="0.9"/><path d="M455.4 170.1h2.8" stroke="#1c1c1c" stroke-width="0.9"/><path d="M455.4 166.9h4" stroke="#1c1c1c" stroke-width="0.9"/><path d="M455.4 163.8h2.8" stroke="#1c1c1c" stroke-width="0.9"/><path d="M455.4 160.7h2.8" stroke="#1c1c1c" stroke-width="0.9"/><path d="M455.4 157.6h2.8" stroke="#1c1c1c" stroke-width="0.9"/><path d="M455.4 154.5h2.8" stroke="#1c1c1c" stroke-width="0.9"/><path d="M455.4 151.4h4" stroke="#1c1c1c" stroke-width="0.9"/><path d="M455.4 148.2h2.8" stroke="#1c1c1c" stroke-width="0.9"/><path d="M455.4 145.1h2.8" stroke="#1c1c1c" stroke-width="0.9"/><path d="M455.4 142.0h2.8" stroke="#1c1c1c" stroke-width="0.9"/><path d="M455.4 138.9h2.8" stroke="#1c1c1c" stroke-width="0.9"/><path d="M455.4 135.8h4" stroke="#1c1c1c" stroke-width="0.9"/><path d="M455.4 132.7h2.8" stroke="#1c1c1c" stroke-width="0.9"/><path d="M455.4 129.5h2.8" stroke="#1c1c1c" stroke-width="0.9"/><path d="M455.4 126.4h2.8" stroke="#1c1c1c" stroke-width="0.9"/><path d="M455.4 123.3h2.8" stroke="#1c1c1c" stroke-width="0.9"/><path d="M455.4 120.2h4" stroke="#1c1c1c" stroke-width="0.9"/><path d="M455.4 117.1h2.8" stroke="#1c1c1c" stroke-width="0.9"/><path d="M455.4 114.0h2.8" stroke="#1c1c1c" stroke-width="0.9"/><path d="M455.4 110.9h2.8" stroke="#1c1c1c" stroke-width="0.9"/><path d="M455.4 107.7h2.8" stroke="#1c1c1c" stroke-width="0.9"/><path d="M455.4 104.6h4" stroke="#1c1c1c" stroke-width="0.9"/><path d="M455.4 101.5h2.8" stroke="#1c1c1c" stroke-width="0.9"/><path d="M455.4 98.4h2.8" stroke="#1c1c1c" stroke-width="0.9"/><path d="M455.4 95.3h2.8" stroke="#1c1c1c" stroke-width="0.9"/><path d="M455.4 92.2h2.8" stroke="#1c1c1c" stroke-width="0.9"/><path d="M455.4 89.0h4" stroke="#1c1c1c" stroke-width="0.9"/><path d="M455.4 85.9h2.8" stroke="#1c1c1c" stroke-width="0.9"/><path d="M455.4 82.8h2.8" stroke="#1c1c1c" stroke-width="0.9"/><path d="M455.4 79.7h2.8" stroke="#1c1c1c" stroke-width="0.9"/><path d="M455.4 76.6h2.8" stroke="#1c1c1c" stroke-width="0.9"/><path d="M455.4 73.5h4" stroke="#1c1c1c" stroke-width="0.9"/><path d="M455.4 70.3h2.8" stroke="#1c1c1c" stroke-width="0.9"/><path d="M455.4 67.2h2.8" stroke="#1c1c1c" stroke-width="0.9"/><path d="M455.4 64.1h2.8" stroke="#1c1c1c" stroke-width="0.9"/><path d="M455.4 61.0h2.8" stroke="#1c1c1c" stroke-width="0.9"/><path d="M455.4 57.9h4" stroke="#1c1c1c" stroke-width="0.9"/><path d="M455.4 54.8h2.8" stroke="#1c1c1c" stroke-width="0.9"/><path d="M455.4 51.6h2.8" stroke="#1c1c1c" stroke-width="0.9"/><path d="M455.4 48.5h2.8" stroke="#1c1c1c" stroke-width="0.9"/><path d="M455.4 45.4h2.8" stroke="#1c1c1c" stroke-width="0.9"/><path d="M455.4 42.3h4" stroke="#1c1c1c" stroke-width="0.9"/><text transform="translate(437.60,216.40) scale(0.722,1)" font-size="7.6" fill="#e4e4e4" >2000</text><text transform="translate(437.60,200.82) scale(0.722,1)" font-size="7.6" fill="#e4e4e4" >3000</text><text transform="translate(437.60,185.24) scale(0.722,1)" font-size="7.6" fill="#e4e4e4" >4000</text><text transform="translate(437.60,169.66) scale(0.722,1)" font-size="7.6" fill="#e4e4e4" >5000</text><text transform="translate(437.60,154.08) scale(0.722,1)" font-size="7.6" fill="#e4e4e4" >6000</text><text transform="translate(437.60,138.50) scale(0.722,1)" font-size="7.6" fill="#e4e4e4" >7000</text><text transform="translate(437.60,122.92) scale(0.722,1)" font-size="7.6" fill="#e4e4e4" >8000</text><text transform="translate(437.60,107.34) scale(0.722,1)" font-size="7.6" fill="#e4e4e4" >9000</text><text transform="translate(434.60,91.76) scale(0.719,1)" font-size="7.6" fill="#e4e4e4" >10000</text><text transform="translate(434.60,76.18) scale(0.739,1)" font-size="7.6" fill="#e4e4e4" >11000</text><text transform="translate(434.60,60.60) scale(0.719,1)" font-size="7.6" fill="#e4e4e4" >12000</text><text transform="translate(434.60,45.02) scale(0.719,1)" font-size="7.6" fill="#e4e4e4" >13000</text><path d="M460.0 222v-2.6" stroke="#1c1c1c" stroke-width="0.8"/><path d="M469.8 222v-2.6" stroke="#1c1c1c" stroke-width="0.8"/><path d="M479.7 222v-2.6" stroke="#1c1c1c" stroke-width="0.8"/><path d="M489.6 222v-2.6" stroke="#1c1c1c" stroke-width="0.8"/><path d="M499.4 222v-2.6" stroke="#1c1c1c" stroke-width="0.8"/><path d="M509.3 222v-2.6" stroke="#1c1c1c" stroke-width="0.8"/><path d="M519.1 222v-2.6" stroke="#1c1c1c" stroke-width="0.8"/><path d="M529.0 222v-2.6" stroke="#1c1c1c" stroke-width="0.8"/><path d="M538.8 222v-2.6" stroke="#1c1c1c" stroke-width="0.8"/><path d="M548.7 222v-2.6" stroke="#1c1c1c" stroke-width="0.8"/><path d="M558.5 222v-2.6" stroke="#1c1c1c" stroke-width="0.8"/><path d="M568.4 222v-2.6" stroke="#1c1c1c" stroke-width="0.8"/><path d="M578.3 222v-2.6" stroke="#1c1c1c" stroke-width="0.8"/><path d="M588.1 222v-2.6" stroke="#1c1c1c" stroke-width="0.8"/><path d="M598.0 222v-2.6" stroke="#1c1c1c" stroke-width="0.8"/><path d="M607.8 222v-2.6" stroke="#1c1c1c" stroke-width="0.8"/><path d="M617.7 222v-2.6" stroke="#1c1c1c" stroke-width="0.8"/><path d="M627.5 222v-2.6" stroke="#1c1c1c" stroke-width="0.8"/><path d="M637.4 222v-2.6" stroke="#1c1c1c" stroke-width="0.8"/><path d="M647.3 222v-2.6" stroke="#1c1c1c" stroke-width="0.8"/><path d="M657.1 222v-2.6" stroke="#1c1c1c" stroke-width="0.8"/><path d="M667.0 222v-2.6" stroke="#1c1c1c" stroke-width="0.8"/><path d="M676.8 222v-2.6" stroke="#1c1c1c" stroke-width="0.8"/><path d="M686.7 222v-2.6" stroke="#1c1c1c" stroke-width="0.8"/><path d="M696.5 222v-2.6" stroke="#1c1c1c" stroke-width="0.8"/><path d="M706.4 222v-2.6" stroke="#1c1c1c" stroke-width="0.8"/><path d="M716.2 222v-2.6" stroke="#1c1c1c" stroke-width="0.8"/><path d="M726.1 222v-2.6" stroke="#1c1c1c" stroke-width="0.8"/><path d="M736.0 222v-2.6" stroke="#1c1c1c" stroke-width="0.8"/><path d="M745.8 222v-2.6" stroke="#1c1c1c" stroke-width="0.8"/><path d="M755.7 222v-2.6" stroke="#1c1c1c" stroke-width="0.8"/><path d="M765.5 222v-2.6" stroke="#1c1c1c" stroke-width="0.8"/><path d="M775.4 222v-2.6" stroke="#1c1c1c" stroke-width="0.8"/><path d="M785.2 222v-2.6" stroke="#1c1c1c" stroke-width="0.8"/><path d="M795.1 222v-2.6" stroke="#1c1c1c" stroke-width="0.8"/><path d="M804.9 222v-2.6" stroke="#1c1c1c" stroke-width="0.8"/><path d="M814.8 222v-2.6" stroke="#1c1c1c" stroke-width="0.8"/><path d="M824.7 222v-2.6" stroke="#1c1c1c" stroke-width="0.8"/><path d="M479.7 222v-4" stroke="#1c1c1c" stroke-width="0.9"/><text transform="translate(469.55,233.81) scale(0.760,1)" font-size="7" fill="#e4e4e4" >11:50:55</text><path d="M529.0 222v-4" stroke="#1c1c1c" stroke-width="0.9"/><text transform="translate(518.83,233.81) scale(0.760,1)" font-size="7" fill="#e4e4e4" >11:51:00</text><path d="M578.3 222v-4" stroke="#1c1c1c" stroke-width="0.9"/><text transform="translate(568.11,233.81) scale(0.760,1)" font-size="7" fill="#e4e4e4" >11:51:05</text><path d="M627.5 222v-4" stroke="#1c1c1c" stroke-width="0.9"/><text transform="translate(617.39,233.81) scale(0.760,1)" font-size="7" fill="#e4e4e4" >11:51:10</text><path d="M676.8 222v-4" stroke="#1c1c1c" stroke-width="0.9"/><text transform="translate(666.67,233.81) scale(0.760,1)" font-size="7" fill="#e4e4e4" >11:51:15</text><path d="M726.1 222v-4" stroke="#1c1c1c" stroke-width="0.9"/><text transform="translate(715.95,233.81) scale(0.760,1)" font-size="7" fill="#e4e4e4" >11:51:20</text><path d="M775.4 222v-4" stroke="#1c1c1c" stroke-width="0.9"/><text transform="translate(765.23,233.81) scale(0.760,1)" font-size="7" fill="#e4e4e4" >11:51:25</text><path d="M824.7 222v-4" stroke="#1c1c1c" stroke-width="0.9"/><text transform="translate(814.51,233.81) scale(0.760,1)" font-size="7" fill="#e4e4e4" >11:51:30</text><text transform="translate(432.00,240.48) scale(0.771,1)" font-size="7.2" fill="#e4e4e4" >Jun Wed 15 2011</text><text transform="translate(631.30,240.48) scale(0.800,1)" font-size="7.2" fill="#e4e4e4" >X Axis</text><g transform="translate(431.6,129.5) rotate(-90)"><text transform="translate(-7.30,2.36) scale(0.796,1)" font-size="6.6" fill="#e4e4e4" >Signal</text></g><path d="M470.0 210.0L470.2 210.0L470.4 210.0L470.6 210.0L470.8 210.0L471.0 210.0L471.2 210.0L471.4 210.0L471.6 210.0L471.8 210.0L472.0 210.0L472.2 210.0L472.4 210.0L472.6 210.0L472.8 210.0L473.0 210.0L473.2 210.0L473.4 210.0L473.6 210.0L473.8 210.0L474.0 210.0L474.2 210.0L474.4 209.8L474.6 209.5L474.8 208.6L475.0 207.2L475.2 205.0L475.4 202.3L475.6 199.6L475.8 197.3L476.0 195.4L476.2 194.2L476.4 193.4L476.6 193.1L476.8 192.9L477.0 192.9L477.2 192.9L477.4 192.9L477.6 192.9L477.8 193.1L478.0 193.4L478.2 194.2L478.4 195.4L478.6 197.3L478.8 199.6L479.0 202.3L479.2 205.0L479.4 207.1L479.6 208.6L479.8 209.4L480.0 209.8L480.2 209.9L480.4 210.0L480.6 210.0L480.8 210.0L481.0 210.0L481.2 210.0L481.4 210.0L481.6 210.0L481.8 210.0L482.0 210.0L482.2 210.0L482.4 209.9L482.6 209.9L482.8 209.9L483.0 209.9L483.2 209.9L483.4 209.9L483.6 209.9L483.8 209.9L484.0 209.9L484.2 209.9L484.4 209.9L484.6 209.9L484.8 209.9L485.0 209.9L485.2 209.9L485.4 209.9L485.6 209.9L485.8 209.9L486.0 209.9L486.2 209.9L486.4 209.9L486.6 209.9L486.8 209.9L487.0 209.9L487.2 209.8L487.4 209.2L487.6 207.8L487.8 205.3L488.0 202.0L488.2 198.6L488.4 195.9L488.6 194.2L488.8 193.3L489.0 193.0L489.2 192.9L489.4 192.9L489.6 192.9L489.8 193.0L490.0 193.3L490.2 194.2L490.4 195.9L490.6 198.6L490.8 201.9L491.0 205.2L491.2 207.8L491.4 209.2L491.6 209.7L491.8 209.9L492.0 209.9L492.2 209.9L492.4 209.9L492.6 209.9L492.8 209.9L493.0 209.9L493.2 209.9L493.4 209.9L493.6 209.9L493.8 209.9L494.0 209.9L494.2 209.9L494.4 209.9L494.6 209.9L494.8 209.9L495.0 209.9L495.2 209.9L495.4 209.9L495.6 209.9L495.8 209.9L496.0 209.9L496.2 209.9L496.4 209.9L496.6 209.9L496.8 209.9L497.0 209.9L497.2 209.9L497.4 209.9L497.6 209.9L497.8 209.9L498.0 209.6L498.2 208.4L498.4 205.6L498.6 201.5L498.8 197.5L499.0 194.8L499.2 193.4L499.4 193.0L499.6 192.9L499.8 192.9L500.0 193.0L500.2 193.4L500.4 194.8L500.6 197.5L500.8 201.5L501.0 205.6L501.2 208.4L501.4 209.6L501.6 209.8L501.8 209.9L502.0 209.9L502.2 209.9L502.4 209.9L502.6 209.9L502.8 209.9L503.0 209.9L503.2 209.9L503.4 209.9L503.6 209.9L503.8 209.9L504.0 209.9L504.2 209.9L504.4 209.8L504.6 209.6L504.8 208.2L505.0 204.8L505.2 200.0L505.4 195.9L505.6 193.7L505.8 193.0L506.0 192.9L506.2 192.9L506.4 193.0L506.6 193.7L506.8 195.9L507.0 200.0L507.2 204.8L507.4 208.2L507.6 209.6L507.8 209.8L508.0 209.8L508.2 209.8L508.4 209.8L508.6 209.8L508.8 209.8L509.0 209.8L509.2 209.8L509.4 209.8L509.6 209.8L509.8 209.8L510.0 209.8L510.2 209.8L510.4 209.8L510.6 209.8L510.8 209.3L511.0 207.0L511.2 202.3L511.4 197.2L511.6 194.1L511.8 193.1L512.0 192.9L512.2 192.9L512.4 193.1L512.6 194.1L512.8 197.2L513.0 202.3L513.2 207.0L513.4 209.3L513.6 209.8L513.8 209.8L514.0 209.8L514.2 209.8L514.4 209.8L514.6 209.8L514.8 209.8L515.0 209.8L515.2 209.8L515.4 209.8L515.6 209.8L515.8 209.8L516.0 209.8L516.2 209.6L516.4 208.0L516.6 203.6L516.8 198.1L517.0 194.4L517.2 193.1L517.4 192.9L517.6 192.9L517.8 193.1L518.0 194.4L518.2 198.1L518.4 203.6L518.6 208.0L518.8 209.6L519.0 209.8L519.2 209.8L519.4 209.8L519.6 209.8L519.8 209.8L520.0 209.8L520.2 209.8L520.4 209.8L520.6 209.8L520.8 209.8L521.0 209.8L521.2 209.8L521.4 209.7L521.6 208.8L521.8 205.0L522.0 199.1L522.2 194.8L522.4 193.2L522.6 192.9L522.8 192.9L523.0 193.2L523.2 194.8L523.4 199.1L523.6 205.0L523.8 208.8L524.0 209.7L524.2 209.8L524.4 209.8L524.6 209.8L524.8 209.8L525.0 209.8L525.2 209.8L525.4 209.8L525.6 209.8L525.8 209.7L526.0 208.3L526.2 203.6L526.4 197.5L526.6 193.9L526.8 193.0L527.0 192.9L527.2 193.0L527.4 193.9L527.6 197.5L527.8 203.6L528.0 208.3L528.2 209.6L528.4 209.8L528.6 209.8L528.8 209.8L529.0 209.7L529.2 209.7L529.4 209.7L529.6 209.7L529.8 209.0L530.0 205.1L530.2 198.6L530.4 194.2L530.6 193.0L530.8 192.9L531.0 193.0L531.2 194.2L531.4 198.6L531.6 205.1L531.8 209.0L532.0 209.7L532.2 209.7L532.4 209.7L532.6 209.7L532.8 209.7L533.0 209.7L533.2 209.7L533.4 209.7L533.6 208.6L533.8 203.5L534.0 196.8L534.2 193.5L534.4 192.9L534.6 192.9L534.8 193.5L535.0 196.8L535.2 203.5L535.4 208.6L535.6 209.7L535.8 209.7L536.0 209.7L536.2 209.7L536.4 209.7L536.6 209.7L536.8 209.3L537.0 205.3L537.2 197.9L537.4 193.6L537.6 192.9L537.8 192.9L538.0 193.6L538.2 197.9L538.4 205.3L538.6 209.3L538.8 209.7L539.0 209.7L539.2 209.7L539.4 209.7L539.6 209.7L539.8 209.7L540.0 209.6L540.2 207.1L540.4 199.3L540.6 193.9L540.8 192.9L541.0 192.9L541.2 193.9L541.4 199.3L541.6 207.1L541.8 209.6L542.0 209.7L542.2 209.7L542.4 209.7L542.6 209.7L542.8 209.7L543.0 208.5L543.2 201.2L543.4 194.3L543.6 192.9L543.8 192.9L544.0 194.3L544.2 201.2L544.4 208.5L544.6 209.7L544.8 209.7L545.0 209.7L545.2 209.7L545.4 209.7L545.6 209.3L545.8 203.5L546.0 194.9L546.2 192.9L546.4 192.9L546.6 194.9L546.8 203.5L547.0 209.3L547.2 209.7L547.4 209.7L547.6 209.7L547.8 209.0L548.0 200.7L548.2 193.5L548.4 192.9L548.6 193.5L548.8 200.7L549.0 209.0L549.2 209.7L549.4 209.7L549.6 209.7L549.8 207.4L550.0 196.7L550.2 193.0L550.4 193.0L550.6 196.7L550.8 207.4L551.0 209.6L551.2 209.7L551.4 209.7L551.6 209.6L551.8 207.4L552.0 196.7L552.2 193.0L552.4 193.0L552.6 196.7L552.8 207.4L553.0 209.6L553.2 209.6L553.4 209.5L553.6 203.5L553.8 193.9L554.0 192.9L554.2 193.9L554.4 203.5L554.6 209.5L554.8 209.6L555.0 209.6L555.2 208.2L555.4 197.4L555.6 193.0L555.8 193.0L556.0 197.4L556.2 208.2L556.4 209.6L556.6 209.6L556.8 209.6L557.0 209.6L557.2 209.7L557.4 209.7L557.6 209.8L557.8 209.8L558.0 209.2L558.2 206.2L558.4 200.8L558.6 196.0L558.8 193.6L559.0 192.9L559.2 192.9L559.4 192.9L559.6 193.6L559.8 196.0L560.0 201.0L560.2 206.7L560.4 209.8L560.6 210.5L560.8 210.7L561.0 210.7L561.2 210.8L561.4 210.8L561.6 210.9L561.8 211.0L562.0 211.0L562.2 211.0L562.4 211.0L562.6 211.0L562.8 211.0L563.0 211.0L563.2 211.0L563.4 211.0L563.6 210.9L563.8 210.9L564.0 210.9L564.2 210.9L564.4 210.9L564.6 210.9L564.8 210.9L565.0 210.9L565.2 210.9L565.4 210.9L565.6 210.8L565.8 210.8L566.0 210.8L566.2 210.8L566.4 210.8L566.6 210.8L566.8 210.8L567.0 210.8L567.2 210.8L567.4 210.7L567.6 210.7L567.8 210.7L568.0 210.7L568.2 210.7L568.4 210.7L568.6 210.7L568.8 210.7L569.0 210.7L569.2 210.6L569.4 210.6L569.6 210.6L569.8 210.6L570.0 210.6L570.2 210.6L570.4 210.6L570.6 210.6L570.8 210.6L571.0 210.6L571.2 210.5L571.4 210.5L571.6 210.5L571.8 207.3L572.0 194.7L572.2 192.9L572.4 194.7L572.6 207.3L572.8 210.5L573.0 210.4L573.2 207.2L573.4 194.7L573.6 192.9L573.8 194.7L574.0 207.2L574.2 210.4L574.4 210.4L574.6 210.4L574.8 210.3L575.0 210.3L575.2 210.3L575.4 210.3L575.6 210.3L575.8 210.3L576.0 210.3L576.2 210.3L576.4 210.3L576.6 210.3L576.8 210.2L577.0 210.2L577.2 209.6L577.4 209.0L577.6 208.4L577.8 207.8L578.0 207.1L578.2 206.5L578.4 205.9L578.6 205.3L578.8 204.7L579.0 204.1L579.2 203.5L579.4 202.9L579.6 202.2L579.8 201.6L580.0 201.0L580.2 200.4L580.4 199.8L580.6 199.2L580.8 198.6L581.0 198.0L581.2 197.4L581.4 196.8L581.6 196.2L581.8 195.6L582.0 195.0L582.2 194.4L582.4 193.8L582.6 193.2L582.8 192.9L583.0 192.9L583.2 192.9L583.4 192.9L583.6 209.9L583.8 209.9L584.0 209.9L584.2 209.8L584.4 209.8L584.6 209.8L584.8 209.8L585.0 209.8L585.2 209.8L585.4 209.8L585.6 209.8L585.8 209.8L586.0 209.8L586.2 209.7L586.4 206.7L586.6 194.6L586.8 192.9L587.0 194.6L587.2 206.6L587.4 209.7L587.6 209.7L587.8 209.7L588.0 209.5L588.2 203.5L588.4 193.9L588.6 192.9L588.8 193.9L589.0 203.5L589.2 209.5L589.4 209.6L589.6 209.6L589.8 209.5L590.0 209.5L590.2 209.5L590.4 209.5L590.6 209.5L590.8 209.5L591.0 209.5L591.2 209.5L591.4 209.5L591.6 209.5L591.8 209.4L592.0 209.4L592.2 209.4L592.4 209.4L592.6 209.4L592.8 209.4L593.0 209.4L593.2 209.4L593.4 209.4L593.6 209.3L593.8 209.3L594.0 209.3L594.2 209.3L594.4 209.3L594.6 209.3L594.8 209.3L595.0 209.3L595.2 209.3L595.4 209.3L595.6 209.2L595.8 209.2L596.0 209.2L596.2 209.2L596.4 209.2L596.6 209.2L596.8 209.2L597.0 209.2L597.2 209.2L597.4 209.1L597.6 209.1L597.8 209.1L598.0 209.1L598.2 209.1L598.4 209.1L598.6 209.1L598.8 209.1L599.0 209.1L599.2 209.0L599.4 209.0L599.6 209.0L599.8 209.0L600.0 209.0L600.2 209.0L600.4 209.0L600.6 209.0L600.8 208.9L601.0 208.9L601.2 208.9L601.4 208.9L601.6 208.9L601.8 208.8L602.0 208.8L602.2 208.8L602.4 208.8L602.6 208.8L602.8 208.8L603.0 208.7L603.2 208.7L603.4 208.7L603.6 208.7L603.8 208.7L604.0 208.6L604.2 208.6L604.4 208.6L604.6 208.6L604.8 208.6L605.0 208.6L605.2 208.5L605.4 208.5L605.6 208.5L605.8 208.5L606.0 208.5L606.2 208.4L606.4 208.4L606.6 208.4L606.8 208.4L607.0 208.4L607.2 208.4L607.4 208.3L607.6 208.3L607.8 205.5L608.0 194.5L608.2 192.9L608.4 194.4L608.6 205.4L608.8 208.2L609.0 208.2L609.2 205.4L609.4 194.4L609.6 192.9L609.8 194.4L610.0 205.3L610.2 208.1L610.4 208.1L610.6 208.1L610.8 208.0L611.0 208.0L611.2 208.0L611.4 208.0L611.6 208.0L611.8 207.9L612.0 207.9L612.2 207.9L612.4 207.9L612.6 207.9L612.8 207.9L613.0 207.8L613.2 207.8L613.4 207.8L613.6 207.8L613.8 207.8L614.0 207.7L614.2 207.7L614.4 207.7L614.6 207.7L614.8 207.7L615.0 207.7L615.2 207.6L615.4 207.6L615.6 207.6L615.8 207.6L616.0 207.6L616.2 207.5L616.4 207.5L616.6 207.5L616.8 207.5L617.0 207.5L617.2 207.5L617.4 207.4L617.6 207.4L617.8 207.4L618.0 207.4L618.2 207.4L618.4 207.4L618.6 207.3L618.8 207.3L619.0 207.3L619.2 207.3L619.4 207.3L619.6 204.6L619.8 194.3L620.0 192.9L620.2 194.3L620.4 204.6L620.6 207.2L620.8 207.1L621.0 204.5L621.2 194.3L621.4 192.9L621.6 194.3L621.8 204.5L622.0 207.0L622.2 207.0L622.4 207.0L622.6 207.0L622.8 207.0L623.0 206.9L623.2 206.9L623.4 206.9L623.6 206.9L623.8 204.3L624.0 194.3L624.2 192.9L624.4 194.3L624.6 204.3L624.8 206.8L625.0 204.2L625.2 194.3L625.4 192.9L625.6 194.3L625.8 204.2L626.0 201.6L626.2 193.1L626.4 193.1L626.6 201.6L626.8 206.7L627.0 206.7L627.2 205.9L627.8 138.9L628.3 159.1L628.9 126.4L629.4 151.4L629.9 101.5L630.4 135.8L630.9 73.5L631.4 107.7L631.9 71.9L632.4 96.8L632.9 73.5L633.4 104.6L633.9 79.7L634.5 85.9L635.0 70.3L635.6 78.1L636.3 68.8L637.0 92.2L637.6 98.4L638.2 68.8L639.0 68.0L639.6 95.3L640.2 99.9L640.8 73.5L641.4 68.0L642.0 71.9L642.6 67.2L643.2 75.0L643.9 67.2L644.5 70.3L645.2 66.4L645.8 75.0L646.4 67.2L647.0 68.0L647.6 73.5L648.2 66.4L648.6 68.9L649.1 69.1L649.6 68.6L650.1 66.9L650.6 67.3L651.1 66.7L651.6 66.8L652.1 67.1L652.6 66.5L653.1 66.7L653.6 68.7L654.1 66.9L654.6 65.4L655.1 66.3L655.6 66.3L656.1 66.7L656.6 66.4L657.1 65.3L657.6 65.2L658.1 66.4L658.6 65.8L659.1 66.1L659.6 67.7L660.1 65.7L660.6 67.3L661.1 65.9L661.6 65.8L662.1 65.6L662.6 65.6L663.1 65.5L663.6 65.2L664.1 65.1L664.6 65.5L665.1 64.8L665.6 64.9L666.1 66.8L666.6 65.1L667.1 64.4L667.6 64.4L668.1 64.4L668.6 64.5L669.1 64.6L669.6 64.1L670.1 64.7L670.6 64.2L671.1 64.5L671.6 63.8L672.1 64.2L672.6 63.7L673.1 63.7L673.6 62.3L674.1 62.1L674.6 63.8L675.1 63.2L675.6 63.7L676.1 63.4L676.6 65.4L677.1 63.3L677.6 63.1L678.1 63.4L678.6 64.8L679.1 62.8L679.6 63.2L680.1 63.2L680.6 62.7L681.1 64.9L681.6 61.1L682.1 64.6L682.6 62.5L683.1 63.8L683.6 62.5L684.1 62.1L684.6 64.0L685.1 61.7L685.6 60.1L686.1 61.6L686.6 61.4L687.1 61.6L687.6 61.3L688.1 60.6L688.6 60.7L689.1 61.0L689.6 60.6L690.1 59.9L690.6 60.1L691.1 60.4L691.6 60.4L692.1 60.0L692.6 59.1L693.1 60.3L693.6 58.9L694.1 59.4L694.6 59.9L695.1 58.2L695.6 58.2L696.1 59.6L696.6 58.8L697.1 58.6L697.6 58.4L698.1 58.4L698.6 59.5L699.1 57.3L699.6 58.4L700.1 57.6L700.6 59.1L701.1 58.1L701.6 57.1L702.1 56.5L702.6 55.7L703.1 57.5L703.6 54.7L704.1 55.5L704.6 54.3L705.1 56.5L705.6 57.0L706.0 46.8L706.3 57.3L706.6 46.9L706.9 58.2L707.2 47.6L707.5 58.4L707.8 47.3L708.1 56.0L708.4 47.5L708.7 58.5L709.0 47.5L709.3 54.4L709.6 47.4L709.9 54.5L710.2 47.7L710.5 54.8L710.8 47.3L711.1 57.9L711.4 47.5L711.7 59.3L712.0 46.7L712.3 59.0L712.6 47.5L712.9 54.9L713.2 47.6L713.5 59.7L713.8 47.1L714.1 57.6L714.4 47.1L714.7 54.4L715.0 47.3L715.3 54.4L715.6 47.5L715.9 56.8L716.2 46.8L716.5 58.5L716.8 46.7L717.1 59.0L717.4 47.2L717.7 56.3L718.0 47.7L718.3 55.5L718.6 47.7L718.9 55.7L719.2 46.7L719.5 54.1L719.8 47.7L720.1 54.7L720.4 47.8L720.7 54.2L721.0 47.3L721.3 56.8L721.6 47.4L721.9 58.0L722.2 47.1L722.5 59.8L722.8 47.7L723.1 55.7L723.4 47.4L723.7 58.0L724.0 46.7L724.3 54.9L724.6 46.8L724.9 55.9L725.2 47.2L725.5 54.2L725.8 47.2L726.1 58.3L726.4 47.5L726.8 53.1L727.1 47.5L727.5 56.2L727.8 47.4L728.2 54.6L728.5 47.3L728.9 55.2L729.2 47.3L729.6 56.1L729.9 47.7L731.5 47.7L731.7 47.1L732.1 55.4L732.4 46.9L732.8 55.4L733.1 46.9L733.5 55.0L733.8 46.8L734.2 54.8L734.5 47.1L734.9 53.4L735.2 47.6L735.6 53.9L735.9 47.5L736.3 56.6L736.6 46.9L737.0 53.2L737.3 47.6L737.7 54.2L738.0 46.9L738.4 56.5L738.7 47.6L739.1 54.8L739.4 47.2L739.8 54.9L740.1 47.7L740.5 53.5L740.8 47.1L741.2 54.8L741.5 46.8L741.9 53.4L742.2 46.9L743.8 46.9L744.0 47.7L744.4 55.6L744.7 47.1L745.1 53.9L745.4 47.7L745.8 54.1L746.1 47.0L746.5 56.6L746.8 47.2L747.2 56.2L747.5 47.1L747.9 55.0L748.2 47.0L748.6 54.1L748.9 46.9L749.3 53.4L749.6 47.0L750.0 54.1L750.3 47.1L751.9 47.1L752.1 47.3L753.7 47.3L753.9 47.5L754.3 53.7L754.6 47.2L755.0 54.9L755.3 47.5L755.7 54.0L756.0 46.9L757.6 46.9L757.8 47.3L758.2 54.6L758.5 47.7L760.1 47.7L760.3 47.5L760.7 56.4L761.0 46.9L761.4 55.0L761.7 47.7L762.1 54.8L762.4 47.6L762.8 54.3L763.1 47.0L763.5 53.3L763.8 46.8L764.2 55.0L764.5 47.6L764.9 53.6L765.2 47.7L765.6 54.6L765.9 47.1L767.5 47.1L767.7 47.5L768.1 56.2L768.4 47.4L768.8 56.6L769.1 47.7L769.5 54.8L769.8 47.4L770.2 53.2L770.5 47.6L770.9 54.5L771.2 47.1L771.6 53.1L771.9 47.2L772.3 56.4L772.6 47.5L774.2 47.5L774.4 47.5L776.0 47.5L776.2 47.0L777.8 47.0L778.0 47.3L778.4 56.1L778.7 47.7L779.1 54.5L779.4 47.7L781.0 47.7L781.2 47.3L781.6 55.2L781.9 47.3L783.5 47.3L783.7 47.7L784.1 54.6L784.4 47.4L786.0 47.4L786.2 46.9L786.6 53.7L786.9 47.1L787.3 53.2L787.6 47.3L788.0 54.0L788.3 47.4L789.9 47.4L790.1 47.5L791.7 47.5L791.9 47.1L793.5 47.1L793.7 47.4L795.3 47.4L795.5 47.4L795.9 54.3L796.2 46.9L796.6 56.5L796.9 46.8L797.3 56.0L797.5 47.1L800.0 47.0L803.0 46.7L807.0 47.0" fill="none" stroke="#a0ce38" stroke-width="0.8" stroke-linejoin="round"/><path d="M470.0 214.3L470.5 214.3L471.0 214.3L471.5 214.3L472.0 214.3L472.5 214.3L473.0 214.3L473.5 214.3L474.0 214.3L474.5 214.3L475.0 214.3L475.5 214.3L476.0 213.9L476.5 213.3L477.0 212.7L477.5 213.3L478.0 213.9L478.5 214.3L479.0 214.3L479.5 214.3L480.0 214.3L480.5 214.3L481.0 214.3L481.5 214.3L482.0 214.3L482.5 214.3L483.0 214.3L483.5 214.3L484.0 214.3L484.5 214.3L485.0 214.3L485.5 214.3L486.0 214.3L486.5 214.3L487.0 214.3L487.5 214.3L488.0 214.3L488.5 214.3L489.0 213.7L489.5 213.1L490.0 212.9L490.5 213.5L491.0 214.1L491.5 214.2L492.0 214.2L492.5 214.2L493.0 214.2L493.5 214.2L494.0 214.2L494.5 214.2L495.0 214.2L495.5 214.2L496.0 214.2L496.5 214.2L497.0 214.2L497.5 214.2L498.0 214.2L498.5 214.2L499.0 213.6L499.5 213.0L500.0 212.9L500.5 213.5L501.0 214.1L501.5 214.2L502.0 214.2L502.5 214.2L503.0 214.2L503.5 214.2L504.0 214.2L504.5 214.2L505.0 213.9L505.5 213.3L506.0 212.7L506.5 213.2L507.0 213.8L507.5 214.2L508.0 214.2L508.5 214.2L509.0 214.2L509.5 214.2L510.0 214.2L510.5 214.2L511.0 214.2L511.5 213.8L512.0 213.2L512.5 212.6L513.0 213.2L513.5 213.8L514.0 214.2L514.5 214.2L515.0 214.2L515.5 214.2L516.0 214.2L516.5 214.1L517.0 213.5L517.5 212.9L518.0 213.0L518.5 213.6L519.0 214.2L519.5 214.2L520.0 214.2L520.5 214.2L521.0 214.2L521.5 214.2L522.0 213.8L522.5 213.2L523.0 212.6L523.5 213.2L524.0 213.8L524.5 214.2L525.0 214.2L525.5 214.2L526.0 214.2L526.5 214.2L527.0 213.6L527.5 213.0L528.0 212.8L528.5 213.4L529.0 214.0L529.5 214.1L530.0 214.1L530.5 214.1L531.0 213.8L531.5 213.2L532.0 212.6L532.5 213.2L533.0 213.8L533.5 214.1L534.0 214.1L534.5 214.1L535.0 213.5L535.5 212.9L536.0 212.8L536.5 213.4L537.0 214.0L537.5 214.1L538.0 214.1L538.5 213.8L539.0 213.2L539.5 212.6L540.0 213.2L540.5 213.8L541.0 214.1L541.5 214.1L542.0 213.8L542.5 213.2L543.0 212.6L543.5 213.2L544.0 213.8L544.5 214.1L545.0 214.1L545.5 213.7L546.0 213.1L546.5 212.5L547.0 213.1L547.5 213.7L548.0 214.1L548.5 214.0L549.0 213.4L549.5 212.8L550.0 212.9L550.5 213.5L551.0 214.1L551.5 214.1L552.0 213.5L552.5 212.9L553.0 212.8L553.5 213.4L554.0 214.0L554.5 214.1L555.0 213.5L555.5 212.9L556.0 212.8L556.5 213.4L557.0 214.0L557.5 213.8L558.0 213.2L558.5 212.6L559.0 213.0L559.5 213.6L560.0 214.1L560.5 214.1L561.0 214.1L561.5 214.1L562.0 214.1L562.5 214.1L563.0 214.1L563.5 214.1L564.0 214.1L564.5 214.0L565.0 214.0L565.5 214.0L566.0 214.0L566.5 214.0L567.0 214.0L567.5 214.0L568.0 214.0L568.5 214.0L569.0 214.0L569.5 214.0L570.0 214.0L570.5 214.0L571.0 214.0L571.5 213.7L572.0 213.1L572.5 212.5L573.0 213.0L573.5 213.6L574.0 214.0L574.5 214.0L575.0 214.0L575.5 214.0L576.0 214.0L576.5 214.0L577.0 214.0L577.5 214.0L578.0 214.0L578.5 214.0L579.0 213.6L579.5 213.0L580.0 212.4L580.5 213.0L581.0 213.6L581.5 214.0L582.0 214.0L582.5 214.0L583.0 214.0L583.5 214.0L584.0 214.0L584.5 214.0L585.0 214.0L585.5 213.9L586.0 213.9L586.5 213.9L587.0 213.6L587.5 213.0L588.0 212.4L588.5 213.0L589.0 213.6L589.5 213.9L590.0 213.9L590.5 213.9L591.0 213.9L591.5 213.9L592.0 213.9L592.5 213.9L593.0 213.9L593.5 213.9L594.0 213.9L594.5 213.9L595.0 213.9L595.5 213.9L596.0 213.9L596.5 213.9L597.0 213.9L597.5 213.9L598.0 213.9L598.5 213.9L599.0 213.9L599.5 213.9L600.0 213.9L600.5 213.9L601.0 213.9L601.5 213.9L602.0 213.9L602.5 213.9L603.0 213.9L603.5 213.9L604.0 213.9L604.5 213.9L605.0 213.9L605.5 213.9L606.0 213.9L606.5 213.8L607.0 213.8L607.5 213.5L608.0 212.9L608.5 212.3L609.0 212.9L609.5 213.5L610.0 213.8L610.5 213.8L611.0 213.8L611.5 213.8L612.0 213.8L612.5 213.8L613.0 213.8L613.5 213.8L614.0 213.8L614.5 213.8L615.0 213.8L615.5 213.8L616.0 213.8L616.5 213.8L617.0 213.8L617.5 213.8L618.0 213.8L618.5 213.8L619.0 213.4L619.5 212.8L620.0 212.2L620.5 212.8L621.0 213.4L621.5 213.8L622.0 213.4L622.5 212.8L623.0 212.2L623.5 212.8L624.0 213.0L624.5 212.8L625.0 212.2L625.5 212.8L626.0 213.4L626.5 213.8L627.0 214.7L627.5 213.5L627.9 213.5L628.4 214.7L628.8 213.2L629.3 213.0L629.7 212.9L630.2 214.1L630.6 212.7L631.1 212.3L631.5 212.1L632.0 211.9L632.4 212.9L632.9 211.5L633.3 211.4L633.8 212.5L634.2 209.6L634.7 211.2L635.1 210.6L635.6 210.4L636.0 210.2L636.5 210.2L636.9 209.8L637.4 209.7L637.8 209.5L638.3 209.3L638.7 209.1L639.2 208.9L639.6 208.7L640.1 209.3L640.5 208.4L641.0 208.5L641.4 208.0L641.9 207.9L642.3 207.7L642.8 207.5L643.2 207.4L643.7 208.6L644.1 207.0L644.6 206.9L645.0 206.7L645.5 206.5L645.9 205.7L646.4 206.5L646.8 206.0L647.3 205.9L647.7 205.7L648.2 205.9L648.6 205.4L649.1 205.0L649.5 205.0L650.0 205.6L650.4 204.7L650.9 204.5L651.3 204.4L651.8 204.9L652.2 203.8L652.7 203.6L653.1 203.6L653.6 203.5L654.0 203.4L654.5 203.2L654.9 203.0L655.4 203.3L655.8 202.7L656.3 202.1L656.7 203.2L657.2 202.2L657.6 201.1L658.1 202.0L658.5 201.8L659.0 202.5L659.4 201.5L659.9 200.3L660.3 201.8L660.8 201.1L661.2 201.0L661.7 200.8L662.1 200.7L662.6 200.6L663.0 201.3L663.5 200.4L663.9 201.0L664.4 199.2L664.8 199.9L665.3 200.5L665.7 199.6L666.2 199.4L666.6 199.3L667.1 199.2L667.5 199.7L668.0 200.2L668.4 198.8L668.9 198.6L669.3 198.8L669.8 199.6L670.2 198.2L670.7 198.1L671.1 198.5L671.6 197.8L672.0 197.6L672.5 197.5L672.9 197.4L673.4 198.0L673.8 197.1L674.3 197.0L674.7 196.8L675.2 197.5L675.6 198.0L676.1 196.4L676.5 195.3L677.0 197.3L677.4 196.0L677.9 195.8L678.3 195.7L678.8 195.5L679.2 195.3L679.7 195.2L680.1 195.0L680.6 193.7L681.0 194.7L681.5 193.2L681.9 194.4L682.4 194.3L682.8 193.4L683.3 193.0L683.7 193.7L684.2 193.4L684.6 193.4L685.1 192.1L685.5 194.5L686.0 191.5L686.4 192.8L686.9 193.0L687.3 191.7L687.8 191.0L688.2 192.8L688.7 192.0L689.1 192.5L689.6 192.3L690.0 191.5L690.5 191.3L690.9 191.2L691.4 191.0L691.8 189.9L692.3 190.7L692.7 190.5L693.2 191.8L693.6 190.5L694.1 190.0L694.5 190.6L695.0 188.6L695.4 189.6L695.9 189.4L696.3 189.3L696.8 189.2L697.2 189.0L697.7 188.9L698.1 188.8L698.6 189.6L699.0 189.1L699.5 188.4L699.9 187.7L700.4 187.8L700.8 188.8L701.3 187.9L701.7 187.7L702.2 187.6L702.6 188.8L703.1 187.4L703.5 187.2L704.0 188.1L704.4 187.0L704.9 186.8L705.3 185.6L705.8 186.6L706.2 186.4L706.7 186.3L707.1 186.2L707.6 185.8L708.0 185.9L708.5 185.8L708.9 185.7L709.4 185.6L709.8 184.7L710.3 185.3L710.7 186.5L711.2 186.0L711.6 184.9L712.1 184.8L712.5 184.7L713.0 183.2L713.4 185.8L713.9 184.3L714.3 184.1L714.8 183.0L715.2 183.9L715.7 183.8L716.1 183.3L716.6 183.6L717.0 183.6L717.5 184.7L717.9 183.4L718.4 183.3L718.8 183.2L719.3 183.1L719.7 184.2L720.2 182.9L720.6 182.8L721.1 182.9L721.5 183.3L722.0 182.5L722.4 182.4L722.9 183.1L723.3 181.6L723.8 181.3L724.2 182.0L724.7 182.4L725.1 181.8L725.6 181.7L726.0 181.6L726.5 181.2L726.9 181.4L727.4 182.7L727.8 179.8L728.3 180.7L728.7 181.1L729.2 181.0L729.6 180.9L730.1 180.8L730.5 181.2L731.0 180.6L731.4 181.5L731.9 180.4L732.3 180.3L732.8 180.7L733.2 180.1L733.7 178.9L734.1 180.0L734.6 179.4L735.0 179.3L735.5 180.7L735.9 179.5L736.4 178.3L736.8 179.4L737.3 178.7L737.7 179.3L738.2 180.0L738.6 179.2L739.1 179.1L739.5 178.4L740.0 179.0L740.4 178.9L740.9 178.9L741.3 179.1L741.8 178.8L742.2 178.7L742.7 178.6L743.1 178.6L743.6 177.5L744.0 178.5L744.5 178.4L744.9 178.1L745.4 179.6L745.8 178.2L746.3 177.2L746.7 179.3L747.2 176.6L747.6 178.1L748.1 179.1L748.5 177.9L749.0 177.7L749.4 178.0L749.9 177.7L750.3 178.7L750.8 179.0L751.2 177.5L751.7 178.5L752.1 177.4L752.6 176.2L753.0 177.3L753.5 176.4L753.9 178.4L754.4 176.6L754.8 177.0L755.3 175.9L755.7 176.4L756.2 176.8L756.6 175.4L757.1 175.4L757.5 176.2L758.0 176.6L758.4 176.7L758.9 176.9L759.3 175.3L759.8 177.2L760.2 176.4L760.7 176.4L761.1 176.3L761.6 176.3L762.0 175.1L762.5 177.3L762.9 176.1L763.4 174.7L763.8 176.0L764.3 176.0L764.7 175.6L765.2 175.9L765.6 175.9L766.1 175.8L766.5 175.1L767.0 176.8L767.4 175.3L767.9 175.6L768.3 175.6L768.8 175.7L769.2 175.7L769.7 175.5L770.1 175.7L770.6 175.3L771.0 174.8L771.5 175.3L771.9 175.2L772.4 175.2L772.8 175.8L773.3 175.1L773.7 175.0L774.2 174.5L774.6 174.8L775.1 174.9L775.5 174.9L776.0 174.8L776.4 174.8L776.9 174.7L777.3 174.7L777.8 174.6L778.2 174.7L778.7 174.1L779.1 174.5L779.6 174.4L780.0 174.4L780.5 174.4L780.9 174.3L781.4 173.8L781.8 174.2L782.3 174.8L782.7 174.1L783.2 173.4L783.6 173.9L784.1 173.5L784.5 173.9L785.0 173.9L785.4 174.3L785.9 173.8L786.3 173.9L786.8 173.9L787.2 173.6L787.7 174.4L788.1 174.1L788.6 174.2L789.0 174.3L789.5 174.3L789.9 174.4L790.4 174.0L790.8 174.5L791.3 173.9L791.7 174.4L792.2 174.5L792.6 174.5L793.1 174.1L793.5 173.9L794.0 174.6L794.4 174.6L794.9 174.1L795.3 174.7L795.8 174.7L796.2 175.1L796.7 174.0L797.1 175.1L797.6 174.7L798.0 174.4L798.5 175.2L798.9 174.8L799.4 174.8L799.8 174.3L800.3 174.5L800.7 174.8L801.2 174.8L801.6 174.8L802.1 174.4L802.5 174.7L803.0 174.5L803.4 174.8L803.9 175.0L804.3 175.4L804.8 174.6L805.2 174.9L805.7 174.9L806.1 174.4L806.6 174.9" fill="none" stroke="#7a1216" stroke-width="1.15" stroke-linejoin="round"/><path d="M537.5 244.4H556" stroke="#9bcb2e" stroke-width="1.3"/><path d="M723.4 244.4H740.6" stroke="#741216" stroke-width="2.4" stroke-linecap="round"/><text transform="translate(531.70,254.31) scale(0.793,1)" font-size="7" fill="#e4e4e4" >Image.Max.</text><text transform="translate(713.20,254.31) scale(0.798,1)" font-size="7" fill="#e4e4e4" >Image.Average</text></svg>
<div class="abs" style="left:425px;top:258px;width:414px;height:234px;background:#2d2d2d;"></div>
<div class="hdr" style="left:425px;top:258px;width:414px;height:13px"></div>
<svg style="left:425px;top:258px" width="414" height="234" viewBox="425 258 414 234"><rect x="456" y="271" width="380" height="199" fill="#ffffff"/><path d="M472.6 271V470" stroke="#e4e4e4" stroke-width="0.8"/><path d="M490.5 271V470" stroke="#e4e4e4" stroke-width="0.8"/><path d="M508.4 271V470" stroke="#e4e4e4" stroke-width="0.8"/><path d="M526.3 271V470" stroke="#e4e4e4" stroke-width="0.8"/><path d="M544.2 271V470" stroke="#e4e4e4" stroke-width="0.8"/><path d="M562.1 271V470" stroke="#e4e4e4" stroke-width="0.8"/><path d="M580.1 271V470" stroke="#e4e4e4" stroke-width="0.8"/><path d="M598.0 271V470" stroke="#e4e4e4" stroke-width="0.8"/><path d="M615.9 271V470" stroke="#e4e4e4" stroke-width="0.8"/><path d="M633.8 271V470" stroke="#e4e4e4" stroke-width="0.8"/><path d="M651.7 271V470" stroke="#e4e4e4" stroke-width="0.8"/><path d="M669.6 271V470" stroke="#e4e4e4" stroke-width="0.8"/><path d="M687.5 271V470" stroke="#e4e4e4" stroke-width="0.8"/><path d="M705.4 271V470" stroke="#e4e4e4" stroke-width="0.8"/><path d="M723.3 271V470" stroke="#e4e4e4" stroke-width="0.8"/><path d="M741.2 271V470" stroke="#e4e4e4" stroke-width="0.8"/><path d="M759.2 271V470" stroke="#e4e4e4" stroke-width="0.8"/><path d="M777.1 271V470" stroke="#e4e4e4" stroke-width="0.8"/><path d="M795.0 271V470" stroke="#e4e4e4" stroke-width="0.8"/><path d="M812.9 271V470" stroke="#e4e4e4" stroke-width="0.8"/><path d="M830.8 271V470" stroke="#e4e4e4" stroke-width="0.8"/><path d="M456 462.3H836" stroke="#e4e4e4" stroke-width="0.8"/><path d="M456 454.3H836" stroke="#e4e4e4" stroke-width="0.8"/><path d="M456 446.3H836" stroke="#e4e4e4" stroke-width="0.8"/><path d="M456 438.3H836" stroke="#e4e4e4" stroke-width="0.8"/><path d="M456 430.3H836" stroke="#e4e4e4" stroke-width="0.8"/><path d="M456 422.3H836" stroke="#e4e4e4" stroke-width="0.8"/><path d="M456 414.3H836" stroke="#e4e4e4" stroke-width="0.8"/><path d="M456 406.3H836" stroke="#e4e4e4" stroke-width="0.8"/><path d="M456 398.3H836" stroke="#e4e4e4" stroke-width="0.8"/><path d="M456 390.3H836" stroke="#e4e4e4" stroke-width="0.8"/><path d="M456 382.3H836" stroke="#e4e4e4" stroke-width="0.8"/><path d="M456 374.3H836" stroke="#e4e4e4" stroke-width="0.8"/><path d="M456 366.3H836" stroke="#e4e4e4" stroke-width="0.8"/><path d="M456 358.3H836" stroke="#e4e4e4" stroke-width="0.8"/><path d="M456 350.3H836" stroke="#e4e4e4" stroke-width="0.8"/><path d="M456 342.3H836" stroke="#e4e4e4" stroke-width="0.8"/><path d="M456 334.3H836" stroke="#e4e4e4" stroke-width="0.8"/><path d="M456 326.3H836" stroke="#e4e4e4" stroke-width="0.8"/><path d="M456 318.3H836" stroke="#e4e4e4" stroke-width="0.8"/><path d="M456 310.3H836" stroke="#e4e4e4" stroke-width="0.8"/><path d="M456 302.3H836" stroke="#e4e4e4" stroke-width="0.8"/><path d="M456 294.3H836" stroke="#e4e4e4" stroke-width="0.8"/><path d="M456 286.3H836" stroke="#e4e4e4" stroke-width="0.8"/><path d="M456 278.3H836" stroke="#e4e4e4" stroke-width="0.8"/><path d="M456 271V470H836" stroke="#1a1a1a" stroke-width="1.3" fill="none"/><text transform="translate(437.60,464.87) scale(0.774,1)" font-size="7.2" fill="#f0f0f0" >1770</text><path d="M450.4 462.3H456" stroke="#e6e6e6" stroke-width="0.8"/><path d="M454.4 458.3H456" stroke="#c8c8c8" stroke-width="0.5"/><path d="M453.4 454.3H456" stroke="#c8c8c8" stroke-width="0.5"/><path d="M454.4 450.3H456" stroke="#c8c8c8" stroke-width="0.5"/><text transform="translate(437.60,448.87) scale(0.774,1)" font-size="7.2" fill="#f0f0f0" >1800</text><path d="M450.4 446.3H456" stroke="#e6e6e6" stroke-width="0.8"/><path d="M454.4 442.3H456" stroke="#c8c8c8" stroke-width="0.5"/><path d="M453.4 438.3H456" stroke="#c8c8c8" stroke-width="0.5"/><path d="M454.4 434.3H456" stroke="#c8c8c8" stroke-width="0.5"/><text transform="translate(437.60,432.87) scale(0.774,1)" font-size="7.2" fill="#f0f0f0" >1830</text><path d="M450.4 430.3H456" stroke="#e6e6e6" stroke-width="0.8"/><path d="M454.4 426.3H456" stroke="#c8c8c8" stroke-width="0.5"/><path d="M453.4 422.3H456" stroke="#c8c8c8" stroke-width="0.5"/><path d="M454.4 418.3H456" stroke="#c8c8c8" stroke-width="0.5"/><text transform="translate(437.60,416.87) scale(0.774,1)" font-size="7.2" fill="#f0f0f0" >1860</text><path d="M450.4 414.3H456" stroke="#e6e6e6" stroke-width="0.8"/><path d="M454.4 410.3H456" stroke="#c8c8c8" stroke-width="0.5"/><path d="M453.4 406.3H456" stroke="#c8c8c8" stroke-width="0.5"/><path d="M454.4 402.3H456" stroke="#c8c8c8" stroke-width="0.5"/><text transform="translate(437.60,400.87) scale(0.774,1)" font-size="7.2" fill="#f0f0f0" >1890</text><path d="M450.4 398.3H456" stroke="#e6e6e6" stroke-width="0.8"/><path d="M454.4 394.3H456" stroke="#c8c8c8" stroke-width="0.5"/><path d="M453.4 390.3H456" stroke="#c8c8c8" stroke-width="0.5"/><path d="M454.4 386.3H456" stroke="#c8c8c8" stroke-width="0.5"/><text transform="translate(437.60,384.87) scale(0.774,1)" font-size="7.2" fill="#f0f0f0" >1920</text><path d="M450.4 382.3H456" stroke="#e6e6e6" stroke-width="0.8"/><path d="M454.4 378.3H456" stroke="#c8c8c8" stroke-width="0.5"/><path d="M453.4 374.3H456" stroke="#c8c8c8" stroke-width="0.5"/><path d="M454.4 370.3H456" stroke="#c8c8c8" stroke-width="0.5"/><text transform="translate(437.60,368.87) scale(0.774,1)" font-size="7.2" fill="#f0f0f0" >1950</text><path d="M450.4 366.3H456" stroke="#e6e6e6" stroke-width="0.8"/><path d="M454.4 362.3H456" stroke="#c8c8c8" stroke-width="0.5"/><path d="M453.4 358.3H456" stroke="#c8c8c8" stroke-width="0.5"/><path d="M454.4 354.3H456" stroke="#c8c8c8" stroke-width="0.5"/><text transform="translate(437.60,352.87) scale(0.774,1)" font-size="7.2" fill="#f0f0f0" >1980</text><path d="M450.4 350.3H456" stroke="#e6e6e6" stroke-width="0.8"/><path d="M454.4 346.3H456" stroke="#c8c8c8" stroke-width="0.5"/><path d="M453.4 342.3H456" stroke="#c8c8c8" stroke-width="0.5"/><path d="M454.4 338.3H456" stroke="#c8c8c8" stroke-width="0.5"/><text transform="translate(437.60,336.87) scale(0.774,1)" font-size="7.2" fill="#f0f0f0" >2010</text><path d="M450.4 334.3H456" stroke="#e6e6e6" stroke-width="0.8"/><path d="M454.4 330.3H456" stroke="#c8c8c8" stroke-width="0.5"/><path d="M453.4 326.3H456" stroke="#c8c8c8" stroke-width="0.5"/><path d="M454.4 322.3H456" stroke="#c8c8c8" stroke-width="0.5"/><text transform="translate(437.60,320.88) scale(0.774,1)" font-size="7.2" fill="#f0f0f0" >2040</text><path d="M450.4 318.3H456" stroke="#e6e6e6" stroke-width="0.8"/><path d="M454.4 314.3H456" stroke="#c8c8c8" stroke-width="0.5"/><path d="M453.4 310.3H456" stroke="#c8c8c8" stroke-width="0.5"/><path d="M454.4 306.3H456" stroke="#c8c8c8" stroke-width="0.5"/><text transform="translate(437.60,304.88) scale(0.774,1)" font-size="7.2" fill="#f0f0f0" >2070</text><path d="M450.4 302.3H456" stroke="#e6e6e6" stroke-width="0.8"/><path d="M454.4 298.3H456" stroke="#c8c8c8" stroke-width="0.5"/><path d="M453.4 294.3H456" stroke="#c8c8c8" stroke-width="0.5"/><path d="M454.4 290.3H456" stroke="#c8c8c8" stroke-width="0.5"/><text transform="translate(437.60,288.88) scale(0.774,1)" font-size="7.2" fill="#f0f0f0" >2100</text><path d="M450.4 286.3H456" stroke="#e6e6e6" stroke-width="0.8"/><path d="M454.4 282.3H456" stroke="#c8c8c8" stroke-width="0.5"/><path d="M453.4 278.3H456" stroke="#c8c8c8" stroke-width="0.5"/><path d="M454.4 274.3H456" stroke="#c8c8c8" stroke-width="0.5"/><path d="M472.6 470v4.6" stroke="#e6e6e6" stroke-width="0.8"/><text transform="translate(471.10,481.81) scale(0.771,1)" font-size="7" fill="#f0f0f0" >0</text><path d="M490.5 470v4.6" stroke="#e6e6e6" stroke-width="0.8"/><text transform="translate(487.56,481.81) scale(0.758,1)" font-size="7" fill="#f0f0f0" >20</text><path d="M508.4 470v4.6" stroke="#e6e6e6" stroke-width="0.8"/><text transform="translate(505.47,481.81) scale(0.758,1)" font-size="7" fill="#f0f0f0" >40</text><path d="M526.3 470v4.6" stroke="#e6e6e6" stroke-width="0.8"/><text transform="translate(523.38,481.81) scale(0.758,1)" font-size="7" fill="#f0f0f0" >60</text><path d="M544.2 470v4.6" stroke="#e6e6e6" stroke-width="0.8"/><text transform="translate(541.29,481.81) scale(0.758,1)" font-size="7" fill="#f0f0f0" >80</text><path d="M562.1 470v4.6" stroke="#e6e6e6" stroke-width="0.8"/><text transform="translate(557.65,481.81) scale(0.771,1)" font-size="7" fill="#f0f0f0" >100</text><path d="M580.1 470v4.6" stroke="#e6e6e6" stroke-width="0.8"/><text transform="translate(575.56,481.81) scale(0.771,1)" font-size="7" fill="#f0f0f0" >120</text><path d="M598.0 470v4.6" stroke="#e6e6e6" stroke-width="0.8"/><text transform="translate(593.47,481.81) scale(0.771,1)" font-size="7" fill="#f0f0f0" >140</text><path d="M615.9 470v4.6" stroke="#e6e6e6" stroke-width="0.8"/><text transform="translate(611.38,481.81) scale(0.771,1)" font-size="7" fill="#f0f0f0" >160</text><path d="M633.8 470v4.6" stroke="#e6e6e6" stroke-width="0.8"/><text transform="translate(629.29,481.81) scale(0.771,1)" font-size="7" fill="#f0f0f0" >180</text><path d="M651.7 470v4.6" stroke="#e6e6e6" stroke-width="0.8"/><text transform="translate(647.20,481.81) scale(0.771,1)" font-size="7" fill="#f0f0f0" >200</text><path d="M669.6 470v4.6" stroke="#e6e6e6" stroke-width="0.8"/><text transform="translate(665.11,481.81) scale(0.771,1)" font-size="7" fill="#f0f0f0" >220</text><path d="M687.5 470v4.6" stroke="#e6e6e6" stroke-width="0.8"/><text transform="translate(683.02,481.81) scale(0.771,1)" font-size="7" fill="#f0f0f0" >240</text><path d="M705.4 470v4.6" stroke="#e6e6e6" stroke-width="0.8"/><text transform="translate(700.93,481.81) scale(0.771,1)" font-size="7" fill="#f0f0f0" >260</text><path d="M723.3 470v4.6" stroke="#e6e6e6" stroke-width="0.8"/><text transform="translate(718.84,481.81) scale(0.771,1)" font-size="7" fill="#f0f0f0" >280</text><path d="M741.2 470v4.6" stroke="#e6e6e6" stroke-width="0.8"/><text transform="translate(736.75,481.81) scale(0.771,1)" font-size="7" fill="#f0f0f0" >300</text><path d="M759.2 470v4.6" stroke="#e6e6e6" stroke-width="0.8"/><text transform="translate(754.66,481.81) scale(0.771,1)" font-size="7" fill="#f0f0f0" >320</text><path d="M777.1 470v4.6" stroke="#e6e6e6" stroke-width="0.8"/><text transform="translate(772.57,481.81) scale(0.771,1)" font-size="7" fill="#f0f0f0" >340</text><path d="M795.0 470v4.6" stroke="#e6e6e6" stroke-width="0.8"/><text transform="translate(790.48,481.81) scale(0.771,1)" font-size="7" fill="#f0f0f0" >360</text><path d="M812.9 470v4.6" stroke="#e6e6e6" stroke-width="0.8"/><text transform="translate(808.39,481.81) scale(0.771,1)" font-size="7" fill="#f0f0f0" >380</text><path d="M830.8 470v4.6" stroke="#e6e6e6" stroke-width="0.8"/><text transform="translate(826.30,481.81) scale(0.771,1)" font-size="7" fill="#f0f0f0" >400</text><text transform="translate(623.70,489.73) scale(0.878,1)" font-size="6.8" fill="#f0f0f0" >Index</text><path d="M472.6 321.6L473.5 323.5L474.4 324.6L475.3 327.1L476.2 328.3L477.1 329.2L478.0 331.2L478.9 331.2L479.8 331.8L480.7 332.0L481.6 334.4L482.5 334.5L483.3 335.4L484.2 333.6L485.1 333.9L486.0 335.7L486.9 333.3L487.8 333.4L488.7 334.3L489.6 334.5L490.5 335.7L491.4 336.1L492.3 334.6L493.2 335.8L494.1 335.4L495.0 335.2L495.9 335.7L496.8 334.5L497.7 334.5L498.6 333.6L499.5 334.6L500.4 334.5L501.3 335.0L502.2 334.8L503.0 335.5L503.9 336.8L504.8 335.8L505.7 336.7L506.6 338.8L507.5 340.9L508.4 344.9L509.3 349.9L510.2 354.8L511.1 361.8L512.0 367.8L512.9 374.9L513.8 383.5L514.7 393.1L515.6 399.0L516.5 405.7L517.4 411.4L518.3 413.9L519.2 414.3L520.1 416.4L521.0 415.9L521.9 418.4L522.7 420.2L523.6 419.1L524.5 419.1L525.4 420.9L526.3 421.8L527.2 420.5L528.1 418.2L529.0 418.1L529.9 419.2L530.8 418.3L531.7 418.0L532.6 417.7L533.5 415.3L534.4 416.5L535.3 415.0L536.2 414.9L537.1 415.1L538.0 413.2L538.9 414.4L539.8 412.6L540.7 413.5L541.6 412.3L542.4 412.5L543.3 411.9L544.2 409.6L545.1 409.6L546.0 410.5L546.9 408.3L547.8 409.4L548.7 408.1L549.6 405.4L550.5 402.5L551.4 400.4L552.3 395.4L553.2 394.8L554.1 392.0L555.0 390.1L555.9 390.7L556.8 392.7L557.7 395.2L558.6 396.4L559.5 396.3L560.4 398.4L561.3 398.3L562.1 399.7L563.0 400.3L563.9 399.7L564.8 401.7L565.7 402.1L566.6 402.0L567.5 404.5L568.4 404.0L569.3 401.5L570.2 401.2L571.1 402.2L572.0 401.5L572.9 399.2L573.8 397.9L574.7 399.1L575.6 395.5L576.5 393.0L577.4 391.1L578.3 386.0L579.2 381.2L580.1 371.1L581.0 360.5L581.9 350.8L582.7 339.9L583.6 328.2L584.5 315.3L585.4 307.2L586.3 299.2L587.2 294.0L588.1 291.1L589.0 289.4L589.9 289.4L590.8 289.2L591.7 289.0L592.6 289.4L593.5 292.4L594.4 294.4L595.3 298.9L596.2 299.8L597.1 300.2L598.0 300.8L598.9 302.2L599.8 303.1L600.7 306.2L601.6 312.9L602.4 325.6L603.3 343.9L604.2 361.8L605.1 367.3L606.0 349.1L606.9 344.4L607.8 304.9L608.7 298.1L609.6 291.1L610.5 288.7L611.4 285.3L612.3 290.8L613.2 297.0L614.1 304.2L615.0 298.5L615.9 296.6L616.8 293.0L617.7 292.9L618.6 289.0L619.5 291.8L620.4 288.8L621.3 287.2L622.1 285.8L623.0 285.7L623.9 285.1L624.8 284.0L625.7 282.7L626.6 284.3L627.5 282.2L628.4 280.5L629.3 279.8L630.2 281.6L631.1 280.6L632.0 280.9L632.9 282.7L633.8 283.1L634.7 284.4L635.6 283.7L636.5 283.9L637.4 286.3L638.3 284.2L639.2 282.9L640.1 283.6L641.0 284.2L641.8 285.6L642.7 284.0L643.6 284.6L644.5 285.2L645.4 283.4L646.3 286.5L647.2 283.6L648.1 287.2L649.0 285.3L649.9 286.4L650.8 288.0L651.7 286.5L652.6 287.9L653.5 287.9L654.4 287.2L655.3 290.2L656.2 291.4L657.1 290.3L658.0 288.9L658.9 291.1L659.8 291.4L660.7 288.5L661.6 289.7L662.4 290.8L663.3 289.0L664.2 291.6L665.1 290.3L666.0 292.4L666.9 291.5L667.8 290.1L668.7 289.7L669.6 290.0L670.5 294.3L671.4 295.8L672.3 323.8L673.2 375.2L674.1 401.1L675.0 422.5L675.9 439.5L676.8 443.9L677.7 447.9L678.6 448.4L679.5 448.2L680.4 447.7L681.3 447.6L682.1 447.4L683.0 446.9L683.9 446.4L684.8 446.3L685.7 443.6L686.6 428.9L687.5 403.1L688.4 361.0L689.3 318.8L690.2 298.0L691.1 293.0L692.0 289.9L692.9 285.7L693.8 286.6L694.7 288.4L695.6 284.6L696.5 290.2L697.4 289.2L698.3 286.6L699.2 289.6L700.1 283.3L701.0 287.4L701.8 287.8L702.7 288.3L703.6 283.6L704.5 284.7L705.4 283.5L706.3 283.9L707.2 283.3L708.1 282.8L709.0 285.4L709.9 289.6L710.8 288.0L711.7 290.7L712.6 292.4L713.5 289.5L714.4 288.1L715.3 292.7L716.2 292.8L717.1 293.1L718.0 291.2L718.9 293.4L719.8 293.4L720.7 292.9L721.5 296.2L722.4 293.7L723.3 293.4L724.2 300.0L725.1 294.3L726.0 297.4L726.9 303.5L727.8 302.6L728.7 297.4L729.6 291.2L730.5 290.9L731.4 288.4L732.3 289.9L733.2 294.2L734.1 296.8L735.0 302.6L735.9 303.3L736.8 309.6L737.7 308.6L738.6 313.7L739.5 321.6L740.4 328.6L741.2 338.1L742.1 342.8L743.0 344.5L743.9 345.3L744.8 346.5L745.7 366.0L746.6 395.3L747.5 424.5L748.4 440.1L749.3 434.7L750.2 446.7L751.1 452.8L752.0 453.5L752.9 453.7L753.8 455.9L754.7 458.0L755.6 454.7L756.5 458.0L757.4 455.0L758.3 457.7L759.2 457.1L760.1 455.2L761.0 458.0L761.8 458.0L762.7 456.4L763.6 455.5L764.5 455.1L765.4 455.7L766.3 454.7L767.2 456.6L768.1 454.7L769.0 458.4L769.9 457.8L770.8 456.5L771.7 457.5L772.6 455.7L773.5 456.1L774.4 456.6L775.3 455.2L776.2 456.5L777.1 457.5L778.0 457.3L778.9 455.3L779.8 455.1L780.7 458.1L781.5 455.3L782.4 454.8L783.3 456.8L784.2 456.6L785.1 458.2L786.0 456.8L786.9 456.9L787.8 456.5L788.7 459.0L789.6 455.0L790.5 456.9L791.4 457.4L792.3 455.7L793.2 456.8L794.1 457.1L795.0 456.3L795.9 458.9L796.8 456.9L797.7 457.5L798.6 455.2L799.5 455.3L800.4 458.2L801.2 457.3L802.1 458.8L803.0 457.5L803.9 455.9L804.8 455.5L805.7 457.4L806.6 458.1L807.5 458.6L808.4 456.8L809.3 455.5L810.2 458.9L811.1 456.2L812.0 459.4L812.9 458.7L813.8 458.6L814.7 456.6L815.6 458.2L816.5 458.1L817.4 457.0L818.3 459.2" fill="none" stroke="#9090d0" stroke-width="0.95" stroke-linejoin="round"/><rect x="807.4" y="276.3" width="23.2" height="11.6" rx="3" fill="#fff" stroke="#333" stroke-width="0.9"/><path d="M810.0 284.1L818.8 280.5" stroke="#8e8ecf" stroke-width="1"/><text transform="translate(821.80,284.49) scale(0.796,1)" font-size="6.4" fill="#222" >Li1</text><g transform="translate(432.9,264.6) scale(0.88)" fill="none" stroke="#ececec" stroke-width="1.15"><rect x="-2.6" y="-2.6" width="5.2" height="5.2"/><path d="M0 -2.6V-5M0 2.6V5M-2.6 0H-5.2M2.6 0H5.2" /><path d="M-1.5 -4.3L0 -5.9L1.5 -4.3M-1.5 4.3L0 5.9L1.5 4.3M-4.3 -1.5L-5.9 0L-4.3 1.5M4.3 -1.5L5.9 0L4.3 1.5" stroke-width="0.9"/></g><g transform="translate(447.9,264.8)" stroke="#ececec" fill="#ececec"><path d="M-5 3L5 -3.4" stroke-width="0.9" stroke-dasharray="2.2 1.2" fill="none"/><circle cx="-1.6" cy="0.9" r="1.2" stroke="none"/><circle cx="1.9" cy="-1.4" r="1.2" stroke="none"/></g><g transform="translate(463.6,264.6)" fill="none"><path d="M-4.5 -5V4.5H5" stroke="#e0e0e0" stroke-width="1"/><path d="M-3.4 3.4L4.6 -3.4" stroke="#d03030" stroke-width="1.2"/><path d="M-0.5 3H4.5" stroke="#d03030" stroke-width="1.1"/></g><g transform="translate(480.7,264.6)"><path d="M-5.2 -2.4H2.2L-1.4 2.4Z" fill="#f4f4f4"/><path d="M1.4 3.4H5.4M3.6 0.4V3.4" stroke="#d8d8d8" stroke-width="0.9" fill="none"/></g><g transform="translate(496,264.6)"><rect x="-4.4" y="-5.2" width="4.4" height="8.4" fill="#f4f4f4"/><path d="M-0.8 -2.6H2.8L4.6 -0.8V5.2H-0.8Z" fill="#f4f4f4" stroke="#3a3a3a" stroke-width="0.6"/></g><path d="M505.3 263.1H510.7L508 266.5Z" fill="#f4f4f4"/><g fill="none" stroke="#b4b4b4" stroke-width="0.8"><rect x="817.0" y="260.79999999999995" width="7.6" height="7.6" rx="0.8"/><path d="M818.6 266.59999999999997H823.0" stroke="#e0e0e0" stroke-width="1"/><rect x="826.4" y="260.79999999999995" width="8.2" height="7.6" rx="0.8"/><path d="M828.4 262.59999999999997L832.6 266.79999999999995M832.6 262.59999999999997L828.4 266.79999999999995" stroke="#ffffff" stroke-width="1.5"/></g><text transform="translate(616.50,267.11) scale(0.832,1)" font-size="7" fill="#dcdcdc" >Profile 1 2011-06-15T115053976.ptw</text></svg>
<div class="abs" style="left:0;top:0;width:839px;height:492px;opacity:0.76">
<div class="abs" style="left:7.4px;top:171px;width:410.4px;height:238px;background:#323232;border:1px solid #5a5a5a;border-bottom:none;box-sizing:border-box"></div>
<div class="hdr" style="left:8.4px;top:171.6px;width:408.4px;height:12.6px"></div>
<div class="abs" style="left:7.4px;top:405.6px;width:410.4px;height:3.6px;background:linear-gradient(#ffffff,#d0d0d0 50%,#8c8c8c);"></div>
<div class="abs" style="left:412.6px;top:405.6px;width:5px;height:3.4px;background:#eeeeee;border:0.6px solid #8a8a8a;box-sizing:border-box"></div>
<svg style="left:7px;top:171px" width="411" height="236" viewBox="7 171 411 236"><rect x="37.8" y="184.8" width="379.2" height="198.09999999999997" fill="#ffffff"/><path d="M54.0 184.8V382.9" stroke="#e4e4e4" stroke-width="0.8"/><path d="M72.0 184.8V382.9" stroke="#e4e4e4" stroke-width="0.8"/><path d="M89.9 184.8V382.9" stroke="#e4e4e4" stroke-width="0.8"/><path d="M107.8 184.8V382.9" stroke="#e4e4e4" stroke-width="0.8"/><path d="M125.8 184.8V382.9" stroke="#e4e4e4" stroke-width="0.8"/><path d="M143.8 184.8V382.9" stroke="#e4e4e4" stroke-width="0.8"/><path d="M161.7 184.8V382.9" stroke="#e4e4e4" stroke-width="0.8"/><path d="M179.6 184.8V382.9" stroke="#e4e4e4" stroke-width="0.8"/><path d="M197.6 184.8V382.9" stroke="#e4e4e4" stroke-width="0.8"/><path d="M215.5 184.8V382.9" stroke="#e4e4e4" stroke-width="0.8"/><path d="M233.5 184.8V382.9" stroke="#e4e4e4" stroke-width="0.8"/><path d="M251.4 184.8V382.9" stroke="#e4e4e4" stroke-width="0.8"/><path d="M269.4 184.8V382.9" stroke="#e4e4e4" stroke-width="0.8"/><path d="M287.4 184.8V382.9" stroke="#e4e4e4" stroke-width="0.8"/><path d="M305.3 184.8V382.9" stroke="#e4e4e4" stroke-width="0.8"/><path d="M323.2 184.8V382.9" stroke="#e4e4e4" stroke-width="0.8"/><path d="M341.2 184.8V382.9" stroke="#e4e4e4" stroke-width="0.8"/><path d="M359.1 184.8V382.9" stroke="#e4e4e4" stroke-width="0.8"/><path d="M377.1 184.8V382.9" stroke="#e4e4e4" stroke-width="0.8"/><path d="M395.1 184.8V382.9" stroke="#e4e4e4" stroke-width="0.8"/><path d="M413.0 184.8V382.9" stroke="#e4e4e4" stroke-width="0.8"/><path d="M37.8 375.8H417" stroke="#e4e4e4" stroke-width="0.8"/><path d="M37.8 367.8H417" stroke="#e4e4e4" stroke-width="0.8"/><path d="M37.8 359.8H417" stroke="#e4e4e4" stroke-width="0.8"/><path d="M37.8 351.8H417" stroke="#e4e4e4" stroke-width="0.8"/><path d="M37.8 343.8H417" stroke="#e4e4e4" stroke-width="0.8"/><path d="M37.8 335.8H417" stroke="#e4e4e4" stroke-width="0.8"/><path d="M37.8 327.8H417" stroke="#e4e4e4" stroke-width="0.8"/><path d="M37.8 319.8H417" stroke="#e4e4e4" stroke-width="0.8"/><path d="M37.8 311.7H417" stroke="#e4e4e4" stroke-width="0.8"/><path d="M37.8 303.7H417" stroke="#e4e4e4" stroke-width="0.8"/><path d="M37.8 295.7H417" stroke="#e4e4e4" stroke-width="0.8"/><path d="M37.8 287.7H417" stroke="#e4e4e4" stroke-width="0.8"/><path d="M37.8 279.7H417" stroke="#e4e4e4" stroke-width="0.8"/><path d="M37.8 271.7H417" stroke="#e4e4e4" stroke-width="0.8"/><path d="M37.8 263.7H417" stroke="#e4e4e4" stroke-width="0.8"/><path d="M37.8 255.7H417" stroke="#e4e4e4" stroke-width="0.8"/><path d="M37.8 247.7H417" stroke="#e4e4e4" stroke-width="0.8"/><path d="M37.8 239.7H417" stroke="#e4e4e4" stroke-width="0.8"/><path d="M37.8 231.6H417" stroke="#e4e4e4" stroke-width="0.8"/><path d="M37.8 223.6H417" stroke="#e4e4e4" stroke-width="0.8"/><path d="M37.8 215.6H417" stroke="#e4e4e4" stroke-width="0.8"/><path d="M37.8 207.6H417" stroke="#e4e4e4" stroke-width="0.8"/><path d="M37.8 199.6H417" stroke="#e4e4e4" stroke-width="0.8"/><path d="M37.8 191.6H417" stroke="#e4e4e4" stroke-width="0.8"/><path d="M37.8 184.8V382.9H417" stroke="#1a1a1a" stroke-width="1.3" fill="none"/><text transform="translate(19.40,378.40) scale(0.774,1)" font-size="7.2" fill="#ffffff" >1770</text><path d="M32.199999999999996 375.8H37.8" stroke="#e6e6e6" stroke-width="0.8"/><path d="M36.199999999999996 371.8H37.8" stroke="#c8c8c8" stroke-width="0.5"/><path d="M35.199999999999996 367.8H37.8" stroke="#c8c8c8" stroke-width="0.5"/><path d="M36.199999999999996 363.8H37.8" stroke="#c8c8c8" stroke-width="0.5"/><text transform="translate(19.40,362.38) scale(0.774,1)" font-size="7.2" fill="#ffffff" >1800</text><path d="M32.199999999999996 359.8H37.8" stroke="#e6e6e6" stroke-width="0.8"/><path d="M36.199999999999996 355.8H37.8" stroke="#c8c8c8" stroke-width="0.5"/><path d="M35.199999999999996 351.8H37.8" stroke="#c8c8c8" stroke-width="0.5"/><path d="M36.199999999999996 347.8H37.8" stroke="#c8c8c8" stroke-width="0.5"/><text transform="translate(19.40,346.36) scale(0.774,1)" font-size="7.2" fill="#ffffff" >1830</text><path d="M32.199999999999996 343.8H37.8" stroke="#e6e6e6" stroke-width="0.8"/><path d="M36.199999999999996 339.8H37.8" stroke="#c8c8c8" stroke-width="0.5"/><path d="M35.199999999999996 335.8H37.8" stroke="#c8c8c8" stroke-width="0.5"/><path d="M36.199999999999996 331.8H37.8" stroke="#c8c8c8" stroke-width="0.5"/><text transform="translate(19.40,330.34) scale(0.774,1)" font-size="7.2" fill="#ffffff" >1860</text><path d="M32.199999999999996 327.8H37.8" stroke="#e6e6e6" stroke-width="0.8"/><path d="M36.199999999999996 323.8H37.8" stroke="#c8c8c8" stroke-width="0.5"/><path d="M35.199999999999996 319.8H37.8" stroke="#c8c8c8" stroke-width="0.5"/><path d="M36.199999999999996 315.8H37.8" stroke="#c8c8c8" stroke-width="0.5"/><text transform="translate(19.40,314.32) scale(0.774,1)" font-size="7.2" fill="#ffffff" >1890</text><path d="M32.199999999999996 311.7H37.8" stroke="#e6e6e6" stroke-width="0.8"/><path d="M36.199999999999996 307.7H37.8" stroke="#c8c8c8" stroke-width="0.5"/><path d="M35.199999999999996 303.7H37.8" stroke="#c8c8c8" stroke-width="0.5"/><path d="M36.199999999999996 299.7H37.8" stroke="#c8c8c8" stroke-width="0.5"/><text transform="translate(19.40,298.30) scale(0.774,1)" font-size="7.2" fill="#ffffff" >1920</text><path d="M32.199999999999996 295.7H37.8" stroke="#e6e6e6" stroke-width="0.8"/><path d="M36.199999999999996 291.7H37.8" stroke="#c8c8c8" stroke-width="0.5"/><path d="M35.199999999999996 287.7H37.8" stroke="#c8c8c8" stroke-width="0.5"/><path d="M36.199999999999996 283.7H37.8" stroke="#c8c8c8" stroke-width="0.5"/><text transform="translate(19.40,282.28) scale(0.774,1)" font-size="7.2" fill="#ffffff" >1950</text><path d="M32.199999999999996 279.7H37.8" stroke="#e6e6e6" stroke-width="0.8"/><path d="M36.199999999999996 275.7H37.8" stroke="#c8c8c8" stroke-width="0.5"/><path d="M35.199999999999996 271.7H37.8" stroke="#c8c8c8" stroke-width="0.5"/><path d="M36.199999999999996 267.7H37.8" stroke="#c8c8c8" stroke-width="0.5"/><text transform="translate(19.40,266.26) scale(0.774,1)" font-size="7.2" fill="#ffffff" >1980</text><path d="M32.199999999999996 263.7H37.8" stroke="#e6e6e6" stroke-width="0.8"/><path d="M36.199999999999996 259.7H37.8" stroke="#c8c8c8" stroke-width="0.5"/><path d="M35.199999999999996 255.7H37.8" stroke="#c8c8c8" stroke-width="0.5"/><path d="M36.199999999999996 251.7H37.8" stroke="#c8c8c8" stroke-width="0.5"/><text transform="translate(19.40,250.24) scale(0.774,1)" font-size="7.2" fill="#ffffff" >2010</text><path d="M32.199999999999996 247.7H37.8" stroke="#e6e6e6" stroke-width="0.8"/><path d="M36.199999999999996 243.7H37.8" stroke="#c8c8c8" stroke-width="0.5"/><path d="M35.199999999999996 239.7H37.8" stroke="#c8c8c8" stroke-width="0.5"/><path d="M36.199999999999996 235.7H37.8" stroke="#c8c8c8" stroke-width="0.5"/><text transform="translate(19.40,234.22) scale(0.774,1)" font-size="7.2" fill="#ffffff" >2040</text><path d="M32.199999999999996 231.6H37.8" stroke="#e6e6e6" stroke-width="0.8"/><path d="M36.199999999999996 227.6H37.8" stroke="#c8c8c8" stroke-width="0.5"/><path d="M35.199999999999996 223.6H37.8" stroke="#c8c8c8" stroke-width="0.5"/><path d="M36.199999999999996 219.6H37.8" stroke="#c8c8c8" stroke-width="0.5"/><text transform="translate(19.40,218.20) scale(0.774,1)" font-size="7.2" fill="#ffffff" >2070</text><path d="M32.199999999999996 215.6H37.8" stroke="#e6e6e6" stroke-width="0.8"/><path d="M36.199999999999996 211.6H37.8" stroke="#c8c8c8" stroke-width="0.5"/><path d="M35.199999999999996 207.6H37.8" stroke="#c8c8c8" stroke-width="0.5"/><path d="M36.199999999999996 203.6H37.8" stroke="#c8c8c8" stroke-width="0.5"/><text transform="translate(19.40,202.18) scale(0.774,1)" font-size="7.2" fill="#ffffff" >2100</text><path d="M32.199999999999996 199.6H37.8" stroke="#e6e6e6" stroke-width="0.8"/><path d="M36.199999999999996 195.6H37.8" stroke="#c8c8c8" stroke-width="0.5"/><path d="M35.199999999999996 191.6H37.8" stroke="#c8c8c8" stroke-width="0.5"/><path d="M36.199999999999996 187.6H37.8" stroke="#c8c8c8" stroke-width="0.5"/><path d="M54.0 382.9v4.6" stroke="#e6e6e6" stroke-width="0.8"/><text transform="translate(52.50,394.71) scale(0.771,1)" font-size="7" fill="#ffffff" >0</text><path d="M72.0 382.9v4.6" stroke="#e6e6e6" stroke-width="0.8"/><text transform="translate(69.00,394.71) scale(0.758,1)" font-size="7" fill="#ffffff" >20</text><path d="M89.9 382.9v4.6" stroke="#e6e6e6" stroke-width="0.8"/><text transform="translate(86.95,394.71) scale(0.758,1)" font-size="7" fill="#ffffff" >40</text><path d="M107.8 382.9v4.6" stroke="#e6e6e6" stroke-width="0.8"/><text transform="translate(104.90,394.71) scale(0.758,1)" font-size="7" fill="#ffffff" >60</text><path d="M125.8 382.9v4.6" stroke="#e6e6e6" stroke-width="0.8"/><text transform="translate(122.85,394.71) scale(0.758,1)" font-size="7" fill="#ffffff" >80</text><path d="M143.8 382.9v4.6" stroke="#e6e6e6" stroke-width="0.8"/><text transform="translate(139.25,394.71) scale(0.771,1)" font-size="7" fill="#ffffff" >100</text><path d="M161.7 382.9v4.6" stroke="#e6e6e6" stroke-width="0.8"/><text transform="translate(157.20,394.71) scale(0.771,1)" font-size="7" fill="#ffffff" >120</text><path d="M179.6 382.9v4.6" stroke="#e6e6e6" stroke-width="0.8"/><text transform="translate(175.15,394.71) scale(0.771,1)" font-size="7" fill="#ffffff" >140</text><path d="M197.6 382.9v4.6" stroke="#e6e6e6" stroke-width="0.8"/><text transform="translate(193.10,394.71) scale(0.771,1)" font-size="7" fill="#ffffff" >160</text><path d="M215.5 382.9v4.6" stroke="#e6e6e6" stroke-width="0.8"/><text transform="translate(211.05,394.71) scale(0.771,1)" font-size="7" fill="#ffffff" >180</text><path d="M233.5 382.9v4.6" stroke="#e6e6e6" stroke-width="0.8"/><text transform="translate(229.00,394.71) scale(0.771,1)" font-size="7" fill="#ffffff" >200</text><path d="M251.4 382.9v4.6" stroke="#e6e6e6" stroke-width="0.8"/><text transform="translate(246.95,394.71) scale(0.771,1)" font-size="7" fill="#ffffff" >220</text><path d="M269.4 382.9v4.6" stroke="#e6e6e6" stroke-width="0.8"/><text transform="translate(264.90,394.71) scale(0.771,1)" font-size="7" fill="#ffffff" >240</text><path d="M287.4 382.9v4.6" stroke="#e6e6e6" stroke-width="0.8"/><text transform="translate(282.85,394.71) scale(0.771,1)" font-size="7" fill="#ffffff" >260</text><path d="M305.3 382.9v4.6" stroke="#e6e6e6" stroke-width="0.8"/><text transform="translate(300.80,394.71) scale(0.771,1)" font-size="7" fill="#ffffff" >280</text><path d="M323.2 382.9v4.6" stroke="#e6e6e6" stroke-width="0.8"/><text transform="translate(318.75,394.71) scale(0.771,1)" font-size="7" fill="#ffffff" >300</text><path d="M341.2 382.9v4.6" stroke="#e6e6e6" stroke-width="0.8"/><text transform="translate(336.70,394.71) scale(0.771,1)" font-size="7" fill="#ffffff" >320</text><path d="M359.1 382.9v4.6" stroke="#e6e6e6" stroke-width="0.8"/><text transform="translate(354.65,394.71) scale(0.771,1)" font-size="7" fill="#ffffff" >340</text><path d="M377.1 382.9v4.6" stroke="#e6e6e6" stroke-width="0.8"/><text transform="translate(372.60,394.71) scale(0.771,1)" font-size="7" fill="#ffffff" >360</text><path d="M395.1 382.9v4.6" stroke="#e6e6e6" stroke-width="0.8"/><text transform="translate(390.55,394.71) scale(0.771,1)" font-size="7" fill="#ffffff" >380</text><path d="M413.0 382.9v4.6" stroke="#e6e6e6" stroke-width="0.8"/><text transform="translate(408.50,394.71) scale(0.771,1)" font-size="7" fill="#ffffff" >400</text><text transform="translate(204.90,402.63) scale(0.878,1)" font-size="6.8" fill="#ffffff" >Index</text><path d="M54.0 235.0L54.9 236.8L55.8 238.0L56.7 240.5L57.6 241.7L58.5 242.5L59.4 244.5L60.3 244.6L61.2 245.2L62.1 245.3L63.0 247.8L63.9 247.8L64.8 248.8L65.7 246.9L66.6 247.3L67.5 249.1L68.4 246.7L69.3 246.8L70.2 247.7L71.1 247.8L72.0 249.1L72.8 249.4L73.7 248.0L74.6 249.2L75.5 248.8L76.4 248.5L77.3 249.0L78.2 247.8L79.1 247.8L80.0 246.9L80.9 248.0L81.8 247.8L82.7 248.4L83.6 248.1L84.5 248.8L85.4 250.2L86.3 249.2L87.2 250.1L88.1 252.2L89.0 254.3L89.9 258.3L90.8 263.3L91.7 268.2L92.6 275.2L93.5 281.2L94.4 288.4L95.3 297.0L96.2 306.5L97.1 312.5L98.0 319.2L98.9 324.9L99.8 327.4L100.7 327.7L101.6 329.8L102.5 329.4L103.4 331.9L104.3 333.7L105.2 332.6L106.1 332.6L107.0 334.4L107.8 335.3L108.7 334.0L109.6 331.7L110.5 331.6L111.4 332.7L112.3 331.7L113.2 331.5L114.1 331.2L115.0 328.7L115.9 330.0L116.8 328.5L117.7 328.3L118.6 328.6L119.5 326.7L120.4 327.9L121.3 326.0L122.2 327.0L123.1 325.8L124.0 325.9L124.9 325.4L125.8 323.1L126.7 323.1L127.6 324.0L128.5 321.7L129.4 322.8L130.3 321.6L131.2 318.8L132.1 315.9L133.0 313.9L133.9 308.8L134.8 308.2L135.7 305.4L136.6 303.5L137.5 304.2L138.4 306.1L139.3 308.6L140.2 309.8L141.1 309.7L142.0 311.9L142.9 311.7L143.8 313.2L144.6 313.7L145.5 313.2L146.4 315.1L147.3 315.5L148.2 315.4L149.1 317.9L150.0 317.5L150.9 314.9L151.8 314.6L152.7 315.6L153.6 315.0L154.5 312.7L155.4 311.3L156.3 312.5L157.2 308.9L158.1 306.4L159.0 304.5L159.9 299.4L160.8 294.6L161.7 284.5L162.6 273.9L163.5 264.2L164.4 253.3L165.3 241.5L166.2 228.6L167.1 220.5L168.0 212.5L168.9 207.3L169.8 204.4L170.7 202.7L171.6 202.7L172.5 202.5L173.4 202.3L174.3 202.7L175.2 205.7L176.1 207.7L177.0 212.2L177.9 213.1L178.8 213.6L179.6 214.1L180.5 215.5L181.4 216.4L182.3 219.6L183.2 226.2L184.1 239.0L185.0 257.2L185.9 275.2L186.8 280.7L187.7 262.4L188.6 257.8L189.5 218.2L190.4 211.5L191.3 204.4L192.2 202.0L193.1 198.6L194.0 204.1L194.9 210.3L195.8 217.5L196.7 211.8L197.6 209.9L198.5 206.3L199.4 206.2L200.3 202.3L201.2 205.2L202.1 202.1L203.0 200.5L203.9 199.1L204.8 199.0L205.7 198.4L206.6 197.3L207.5 196.0L208.4 197.6L209.3 195.5L210.2 193.8L211.1 193.1L212.0 194.9L212.9 193.9L213.8 194.2L214.7 196.0L215.5 196.4L216.4 197.7L217.3 197.0L218.2 197.2L219.1 199.6L220.0 197.5L220.9 196.2L221.8 196.9L222.7 197.5L223.6 198.9L224.5 197.3L225.4 197.9L226.3 198.5L227.2 196.7L228.1 199.8L229.0 196.9L229.9 200.5L230.8 198.6L231.7 199.7L232.6 201.3L233.5 199.8L234.4 201.2L235.3 201.2L236.2 200.5L237.1 203.5L238.0 204.7L238.9 203.7L239.8 202.2L240.7 204.4L241.6 204.7L242.5 201.8L243.4 203.0L244.3 204.1L245.2 202.3L246.1 204.9L247.0 203.6L247.9 205.7L248.8 204.8L249.7 203.4L250.6 203.0L251.4 203.3L252.3 207.6L253.2 209.1L254.1 237.2L255.0 288.6L255.9 314.6L256.8 335.9L257.7 353.0L258.6 357.4L259.5 361.5L260.4 361.9L261.3 361.8L262.2 361.2L263.1 361.1L264.0 360.9L264.9 360.4L265.8 359.9L266.7 359.8L267.6 357.1L268.5 342.3L269.4 316.6L270.3 274.4L271.2 232.1L272.1 211.3L273.0 206.4L273.9 203.2L274.8 199.0L275.7 199.9L276.6 201.7L277.5 197.9L278.4 203.5L279.3 202.5L280.2 199.9L281.1 202.9L282.0 196.6L282.9 200.7L283.8 201.1L284.7 201.6L285.6 196.9L286.5 198.0L287.4 196.8L288.2 197.2L289.1 196.6L290.0 196.1L290.9 198.7L291.8 202.9L292.7 201.3L293.6 204.0L294.5 205.8L295.4 202.8L296.3 201.5L297.2 206.1L298.1 206.1L299.0 206.4L299.9 204.6L300.8 206.7L301.7 206.8L302.6 206.2L303.5 209.5L304.4 207.0L305.3 206.7L306.2 213.4L307.1 207.6L308.0 210.8L308.9 216.8L309.8 216.0L310.7 210.7L311.6 204.5L312.5 204.2L313.4 201.7L314.3 203.2L315.2 207.5L316.1 210.2L317.0 215.9L317.9 216.6L318.8 222.9L319.7 222.0L320.6 227.0L321.5 235.0L322.4 241.9L323.2 251.5L324.1 256.1L325.0 257.8L325.9 258.6L326.8 259.9L327.7 279.4L328.6 308.7L329.5 338.0L330.4 353.6L331.3 348.2L332.2 360.2L333.1 366.3L334.0 367.1L334.9 367.2L335.8 369.5L336.7 371.5L337.6 368.3L338.5 371.5L339.4 368.5L340.3 371.3L341.2 370.7L342.1 368.7L343.0 371.5L343.9 371.5L344.8 369.9L345.7 369.1L346.6 368.6L347.5 369.3L348.4 368.2L349.3 370.1L350.2 368.2L351.1 371.9L352.0 371.3L352.9 370.0L353.8 371.1L354.7 369.2L355.6 369.6L356.5 370.1L357.4 368.8L358.3 370.0L359.1 371.1L360.0 370.8L360.9 368.8L361.8 368.6L362.7 371.6L363.6 368.9L364.5 368.4L365.4 370.3L366.3 370.1L367.2 371.7L368.1 370.3L369.0 370.4L369.9 370.0L370.8 372.5L371.7 368.5L372.6 370.4L373.5 371.0L374.4 369.3L375.3 370.3L376.2 370.6L377.1 369.8L378.0 372.5L378.9 370.5L379.8 371.0L380.7 368.7L381.6 368.9L382.5 371.7L383.4 370.8L384.3 372.3L385.2 371.0L386.1 369.4L387.0 369.1L387.9 370.9L388.8 371.6L389.7 372.1L390.6 370.3L391.5 369.0L392.4 372.5L393.3 369.7L394.2 372.9L395.1 372.2L395.9 372.1L396.8 370.2L397.7 371.7L398.6 371.6L399.5 370.5L400.4 372.7" fill="none" stroke="#7c7cc6" stroke-width="0.95" stroke-linejoin="round"/><rect x="389.6" y="189.2" width="23.2" height="11.6" rx="3" fill="#fff" stroke="#333" stroke-width="0.9"/><path d="M392.20000000000005 197.0L401.0 193.39999999999998" stroke="#8e8ecf" stroke-width="1"/><text transform="translate(404.00,197.39) scale(0.796,1)" font-size="6.4" fill="#222" >Li1</text><g transform="translate(14.2,177.6) scale(0.88)" fill="none" stroke="#ececec" stroke-width="1.15"><rect x="-2.6" y="-2.6" width="5.2" height="5.2"/><path d="M0 -2.6V-5M0 2.6V5M-2.6 0H-5.2M2.6 0H5.2" /><path d="M-1.5 -4.3L0 -5.9L1.5 -4.3M-1.5 4.3L0 5.9L1.5 4.3M-4.3 -1.5L-5.9 0L-4.3 1.5M4.3 -1.5L5.9 0L4.3 1.5" stroke-width="0.9"/></g><g transform="translate(29.5,177.79999999999998)" stroke="#ececec" fill="#ececec"><path d="M-5 3L5 -3.4" stroke-width="0.9" stroke-dasharray="2.2 1.2" fill="none"/><circle cx="-1.6" cy="0.9" r="1.2" stroke="none"/><circle cx="1.9" cy="-1.4" r="1.2" stroke="none"/></g><g transform="translate(45.8,177.6)" fill="none"><path d="M-4.5 -5V4.5H5" stroke="#e0e0e0" stroke-width="1"/><path d="M-3.4 3.4L4.6 -3.4" stroke="#d03030" stroke-width="1.2"/><path d="M-0.5 3H4.5" stroke="#d03030" stroke-width="1.1"/></g><g transform="translate(63.7,177.6)"><path d="M-5.2 -2.4H2.2L-1.4 2.4Z" fill="#f4f4f4"/><path d="M1.4 3.4H5.4M3.6 0.4V3.4" stroke="#d8d8d8" stroke-width="0.9" fill="none"/></g><g transform="translate(78.3,177.6)"><rect x="-4.4" y="-5.2" width="4.4" height="8.4" fill="#f4f4f4"/><path d="M-0.8 -2.6H2.8L4.6 -0.8V5.2H-0.8Z" fill="#f4f4f4" stroke="#3a3a3a" stroke-width="0.6"/></g><path d="M86.8 176.1H92.2L89.5 179.5Z" fill="#f4f4f4"/><g fill="none" stroke="#b4b4b4" stroke-width="0.8"><rect x="397.0" y="174.1" width="7.6" height="7.6" rx="0.8"/><path d="M398.6 179.89999999999998H403.0" stroke="#e0e0e0" stroke-width="1"/><rect x="406.40000000000003" y="174.1" width="8.2" height="7.6" rx="0.8"/><path d="M408.40000000000003 175.89999999999998L412.6 180.1M412.6 175.89999999999998L408.40000000000003 180.1" stroke="#ffffff" stroke-width="1.5"/></g><text transform="translate(198.70,180.21) scale(0.832,1)" font-size="7" fill="#dcdcdc" >Profile 1 2011-06-15T115053976.ptw</text></svg>
</div>
<div class="abs" style="left:11.8px;top:258px;width:411.9px;height:236px;border:2px solid #4882d8;border-right-width:3.2px;box-sizing:border-box"></div>
<svg style="left:0;top:0" width="839" height="32" viewBox="0 0 839 32"><text transform="translate(12.20,10.98) scale(0.845,1)" font-size="7.2" fill="#f2f2f2" >My first set of images</text><text transform="translate(88.00,10.98) scale(0.837,1)" font-size="7.2" fill="#6c6c6c" >Another set of images</text><path d="M77 7.4L81 11.4M81 7.4L77 11.4" stroke="#fff" stroke-width="1.2"/><path d="M163.4 10H169.2M166.3 7.1V12.9" stroke="#ececec" stroke-width="1.4"/><rect x="12.6" y="17.6" width="13.6" height="11.2" fill="#1a1a1a" stroke="#5a5a5a" stroke-width="0.8"/><rect x="88.4" y="17.6" width="15" height="11.2" fill="#1a1a1a" stroke="#5a5a5a" stroke-width="0.8"/><path d="M17.2 20.2L17.2 27L18.9 25.6L20.1 28L21.2 27.5L20 25.1L22.2 24.9Z" fill="#fff"/><g stroke="#e4e4e4" fill="none" stroke-width="1"><circle cx="34.7" cy="23.5" r="2.1"/><path d="M34.7 19.2V21.4M34.7 25.6V27.8M30.4 23.5H32.6M36.8 23.5H39"/></g><rect x="45.6" y="20.6" width="8.4" height="6" fill="none" stroke="#cfcfcf" stroke-width="0.9"/><circle cx="65.4" cy="23.5" r="4.2" fill="none" stroke="#cfcfcf" stroke-width="0.9"/><path d="M77.2 20.3L83.8 27" stroke="#c4c4c4" stroke-width="0.9"/><path d="M91.6 23.4C93 20.8 97.8 20.8 99.2 23.4" fill="none" stroke="#f0f0f0" stroke-width="0.9"/><ellipse cx="93.4" cy="25.3" rx="2" ry="1.4" fill="#f4f4f4"/><ellipse cx="97.6" cy="25.3" rx="2" ry="1.4" fill="#f4f4f4"/><circle cx="93.6" cy="25.4" r="0.6" fill="#222"/><circle cx="97.4" cy="25.4" r="0.6" fill="#222"/><g fill="none" stroke="#dcdcdc" stroke-width="0.9"><path d="M113.4 22.2A3.6 3.6 0 1 1 108.6 20.6"/></g><path d="M107.6 18.8L110.6 19.9L108.3 22Z" fill="#dcdcdc"/><circle cx="110.2" cy="23.8" r="0.8" fill="#dcdcdc"/><g transform="translate(124.8,23.7) scale(0.8)"><g transform="translate(0,0)"><rect x="-4.5" y="-4.5" width="9" height="9" fill="#f4f4f4"/><rect x="-2.6" y="-4.5" width="5.2" height="3.4" fill="#3a3a3a"/><rect x="0.6" y="-4" width="1.3" height="2.4" fill="#f4f4f4"/><rect x="-3" y="0.8" width="6" height="3.7" fill="#3a3a3a" opacity="0.55"/></g></g><path d="M135.70000000000002 22.1H141.1L138.4 25.5Z" fill="#f4f4f4"/><g fill="none" stroke="#b4b4b4" stroke-width="0.8"><rect x="402.7" y="20.4" width="7.6" height="7.6" rx="0.8"/><path d="M404.3 26.2H408.7" stroke="#e0e0e0" stroke-width="1"/><rect x="412.1" y="20.4" width="8.2" height="7.6" rx="0.8"/><path d="M414.1 22.2L418.3 26.4M418.3 22.2L414.1 26.4" stroke="#ffffff" stroke-width="1.5"/></g><text transform="translate(236.80,26.11) scale(0.840,1)" font-size="7" fill="#dcdcdc" >2011-06-15T115053976.ptw</text><rect x="426" y="17.6" width="13.8" height="11.2" fill="#1a1a1a" stroke="#5a5a5a" stroke-width="0.8"/><g transform="translate(433,23.3) scale(0.88)" fill="none" stroke="#ececec" stroke-width="1.15"><rect x="-2.6" y="-2.6" width="5.2" height="5.2"/><path d="M0 -2.6V-5M0 2.6V5M-2.6 0H-5.2M2.6 0H5.2" /><path d="M-1.5 -4.3L0 -5.9L1.5 -4.3M-1.5 4.3L0 5.9L1.5 4.3M-4.3 -1.5L-5.9 0L-4.3 1.5M4.3 -1.5L5.9 0L4.3 1.5" stroke-width="0.9"/></g><g transform="translate(448.2,23.4)" stroke="#ececec" fill="#ececec"><path d="M-5 3L5 -3.4" stroke-width="0.9" stroke-dasharray="2.2 1.2" fill="none"/><circle cx="-1.6" cy="0.9" r="1.2" stroke="none"/><circle cx="1.9" cy="-1.4" r="1.2" stroke="none"/></g><g transform="translate(463.6,23.4)"><path d="M0.2 -5V5" stroke="#c0282a" stroke-width="1.1"/><path d="M-5 3.4L5 -3.2" stroke="#e8e8e8" stroke-width="1.3"/></g><g transform="translate(476.5,23.4)"><rect x="-4.5" y="-4.5" width="9" height="9" fill="#9c9c9c"/><rect x="-2.6" y="-4.5" width="5.2" height="3.4" fill="#4a4a4a"/><rect x="0.6" y="-4" width="1.3" height="2.4" fill="#9c9c9c"/><rect x="-3" y="0.8" width="6" height="3.7" fill="#4a4a4a" opacity="0.55"/></g><path d="M485.2 22.1H490.59999999999997L487.9 25.5Z" fill="#f4f4f4"/><g fill="none" stroke="#b4b4b4" stroke-width="0.8"><rect x="815.4" y="20.4" width="7.6" height="7.6" rx="0.8"/><path d="M817 26.2H821.4" stroke="#e0e0e0" stroke-width="1"/><rect x="824.8" y="20.4" width="8.2" height="7.6" rx="0.8"/><path d="M826.8 22.2L831 26.4M831 22.2L826.8 26.4" stroke="#ffffff" stroke-width="1.5"/></g><text transform="translate(609.00,26.11) scale(0.843,1)" font-size="7" fill="#dcdcdc" >Plot 1 2011-06-15T115053976.ptw</text></svg>
</body></html>
